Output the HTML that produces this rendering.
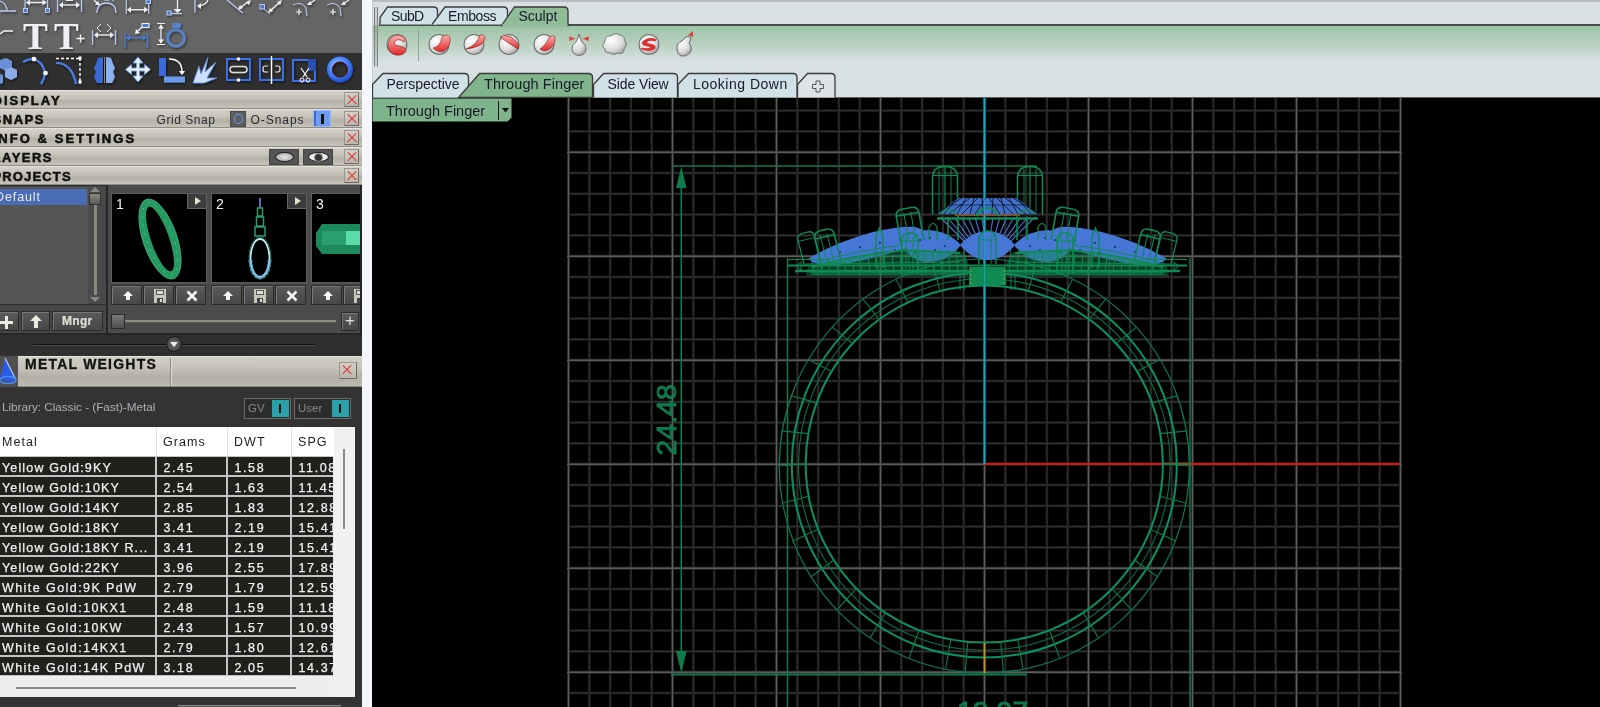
<!DOCTYPE html><html><head><meta charset="utf-8"><style>
*{margin:0;padding:0;box-sizing:border-box}
html,body{width:1600px;height:707px;overflow:hidden;background:#000;font-family:"Liberation Sans",sans-serif}
.a{position:absolute}
#left{left:0;top:0;width:362px;height:707px;background:#333;overflow:hidden}
.hdr{position:absolute;left:0;width:362px;height:19px;background:linear-gradient(#d4d1c8,#c3c0b6 45%,#b4b1a7 60%,#c6c3b9);border-top:1px solid #e6e3dc;border-bottom:1px solid #8e8b83;font-weight:bold;font-size:13px;color:#111;letter-spacing:0.6px;line-height:17px}
.hdr span.t{position:absolute;left:-7.5px;top:1px;-webkit-text-stroke:0.55px #111}
.xb{position:absolute;left:344px;width:15px;height:15px;background:linear-gradient(#d2cfc6,#b9b6ad);border:1px solid #9a978f;border-right-color:#6e6b64;border-bottom-color:#6e6b64}
.xb:before,.xb:after{content:"";position:absolute;left:1px;top:6px;width:12px;height:1.3px;background:#e03030;transform:rotate(45deg)}
.xb:after{transform:rotate(-45deg)}
#right{left:372px;top:0;width:1228px;height:98px;background:#d8e0e4}
.tab{position:absolute;font-size:14px;color:#1a1a2a;line-height:18px}
.gl{mix-blend-mode:lighten}
</style></head><body>
<div id="left" class="a">
<div class="a" style="left:0;top:0;width:362px;height:53px;background:#656565"></div>
<div class="a" style="left:0;top:53px;width:362px;height:37px;background:#2f2f2f"></div>
<svg class="a" style="left:0;top:0" width="362" height="90" viewBox="0 0 362 90"><defs><filter id="sh" x="-20%" y="-20%" width="150%" height="150%"><feDropShadow dx="1" dy="1.5" stdDeviation="0.8" flood-color="#000" flood-opacity="0.55"/></filter><radialGradient id="bring" cx="0.4" cy="0.35" r="0.75"><stop offset="0" stop-color="#c0d8ff"/><stop offset="0.55" stop-color="#4a88ff"/><stop offset="1" stop-color="#2050d0"/></radialGradient></defs><g filter="url(#sh)" fill="none" stroke-linecap="butt"><path d="M0,1 Q6,3 7,10" stroke="#b8c8ee" stroke-width="1.3"/><line x1="0" y1="11" x2="16" y2="11" stroke="#b8c8ee" stroke-width="1.5"/><line x1="25" y1="0" x2="25" y2="10" stroke="#b8c8ee" stroke-width="1.2"/><line x1="47.5" y1="0" x2="47.5" y2="10" stroke="#b8c8ee" stroke-width="1.2"/><line x1="27" y1="2.5" x2="46" y2="2.5" stroke="#eef0f6" stroke-width="1.3"/><path d="M26,2.5 l4,-3 v6 Z M46.5,2.5 l-4,-3 v6 Z" fill="#eef0f6" stroke="none"/><rect x="23.5" y="8.5" width="4" height="4" fill="#4a78d0" stroke="#b8c8ee" stroke-width="1"/><rect x="45.5" y="8.5" width="4" height="4" fill="#4a78d0" stroke="#b8c8ee" stroke-width="1"/><line x1="57.5" y1="0" x2="57.5" y2="12" stroke="#b8c8ee" stroke-width="1.2"/><line x1="81.5" y1="0" x2="81.5" y2="12" stroke="#b8c8ee" stroke-width="1.2"/><line x1="60" y1="5" x2="79" y2="5" stroke="#eef0f6" stroke-width="1.3"/><path d="M59,5 l4,-3 v6 Z M80,5 l-4,-3 v6 Z" fill="#eef0f6" stroke="none"/><rect x="66" y="-1" width="7" height="2" fill="#eef0f6" stroke="none"/><path d="M97,13 Q97,3 106.5,3 Q116,3 116,13" stroke="#b8c8ee" stroke-width="1.3"/><path d="M94,0 L99,5" stroke="#eef0f6" stroke-width="1.2"/><path d="M100,5 l-5,0 l3,-4 Z" fill="#eef0f6" stroke="none"/><path d="M104,0 Q108,0 109,1 M112,0 Q113,1 114,1" stroke="#b8c8ee" stroke-width="1"/><line x1="126.3" y1="0" x2="126.3" y2="14" stroke="#b8c8ee" stroke-width="1.2"/><line x1="148.6" y1="0" x2="148.6" y2="14" stroke="#b8c8ee" stroke-width="1.2"/><line x1="128" y1="9.7" x2="147" y2="9.7" stroke="#eef0f6" stroke-width="1.3"/><path d="M127,9.7 l4,-3 v6 Z M148,9.7 l-4,-3 v6 Z" fill="#eef0f6" stroke="none"/><rect x="146" y="0" width="4.5" height="3.5" fill="#4a78d0" stroke="#b8c8ee" stroke-width="1"/><line x1="177.5" y1="0" x2="177.5" y2="11" stroke="#eef0f6" stroke-width="1.2"/><path d="M173.5,9 h8 l-4,4 Z" fill="#eef0f6" stroke="none"/><line x1="171" y1="13.5" x2="182" y2="13.5" stroke="#b8c8ee" stroke-width="1.2"/><rect x="167" y="11" width="4" height="4" fill="#4a78d0" stroke="#b8c8ee" stroke-width="1"/><line x1="195" y1="0" x2="195" y2="12.5" stroke="#b8c8ee" stroke-width="1.3"/><path d="M199,6 Q206,5 208,0" stroke="#eef0f6" stroke-width="1.2"/><path d="M197,6 l4,-3 v6 Z" fill="#eef0f6" stroke="none"/><line x1="227" y1="0" x2="243" y2="13" stroke="#b8c8ee" stroke-width="1.1"/><line x1="240" y1="8" x2="249" y2="1" stroke="#eef0f6" stroke-width="1.3"/><path d="M238,10 l2,-5 l3,3 Z M251,0 l-2,5 l-3,-3 Z" fill="#eef0f6" stroke="none"/><rect x="260" y="4.5" width="4.5" height="4.5" fill="#4a78d0" stroke="#b8c8ee" stroke-width="1"/><line x1="264" y1="9" x2="270" y2="14" stroke="#b8c8ee" stroke-width="1"/><line x1="270" y1="11" x2="280" y2="2" stroke="#eef0f6" stroke-width="1.3"/><path d="M268,13 l2,-5 l3,3 Z M282,0 l-2,5 l-3,-3 Z" fill="#eef0f6" stroke="none"/><path d="M293,5 Q301,1 306,8 L307,16" stroke="#b8c8ee" stroke-width="1.1"/><path d="M296,12 h6 M299,9 v6" stroke="#eef0f6" stroke-width="1.2"/><line x1="309" y1="4" x2="315" y2="0" stroke="#eef0f6" stroke-width="1.2"/><path d="M307,5 l5,0 l-2,-4 Z" fill="#eef0f6" stroke="none"/><path d="M327,5 Q335,1 340,8 L341,16" stroke="#b8c8ee" stroke-width="1.1"/><path d="M330,12 h6 M333,9 v6" stroke="#eef0f6" stroke-width="1.2"/><line x1="343" y1="4" x2="349" y2="0" stroke="#eef0f6" stroke-width="1.2"/><path d="M341,5 l5,0 l-2,-4 Z" fill="#eef0f6" stroke="none"/><path d="M0,34 L4,31 L13,31" stroke="#eef0f6" stroke-width="1.3"/></g><g filter="url(#sh)"><text x="23" y="49" font-family="Liberation Serif" font-weight="bold" font-size="37" fill="#eef0f6">T</text><text x="54" y="49" font-family="Liberation Serif" font-weight="bold" font-size="37" fill="#eef0f6">T</text></g><g filter="url(#sh)" fill="none"><path d="M76.5,38.5 h8 M80.5,34.5 v8" stroke="#eef0f6" stroke-width="1.3"/><line x1="92.5" y1="30" x2="92.5" y2="45" stroke="#b8c8ee" stroke-width="1.2"/><line x1="115.5" y1="30" x2="115.5" y2="45" stroke="#b8c8ee" stroke-width="1.2"/><line x1="95" y1="35" x2="113" y2="35" stroke="#eef0f6" stroke-width="1.3"/><path d="M94,35 l4,-3 v6 Z M114,35 l-4,-3 v6 Z" fill="#eef0f6" stroke="none"/><path d="M101,24 l-4,4 l4,4 M107,24 l4,4 l-4,4" stroke="#eef0f6" stroke-width="1"/><line x1="125" y1="33" x2="125" y2="48" stroke="#4a78d0" stroke-width="1.3"/><line x1="147.5" y1="33" x2="147.5" y2="48" stroke="#4a78d0" stroke-width="1.3"/><line x1="127" y1="37.8" x2="146" y2="37.8" stroke="#4a78d0" stroke-width="1.4"/><path d="M126,37.8 l4,-3 v6 Z M146.5,37.8 l-4,-3 v6 Z" fill="#4a78d0" stroke="none"/><line x1="136" y1="33" x2="142" y2="27" stroke="#eef0f6" stroke-width="1.2"/><path d="M135,34 l1,-5 l4,4 Z" fill="#eef0f6" stroke="none"/><rect x="142" y="23.5" width="7" height="4" fill="#4a78d0" stroke="#eef0f6" stroke-width="1.1"/><path d="M157,23.5 h8 M157,44.5 h8 M161,25 v18" stroke="#eef0f6" stroke-width="1.2"/><path d="M161,24.5 l-3,4 h6 Z M161,43.5 l-3,-4 h6 Z" fill="#eef0f6" stroke="none"/><circle cx="176" cy="38" r="8.3" stroke="#5a80c8" stroke-width="3"/><path d="M172,23 h9 v5 h-9 Z" fill="#5a80c8" stroke="none"/></g><g filter="url(#sh)" fill="none"><path d="M0,60 l6,-2 l6,3 v7 l-6,3 l-6,-3 Z M0,74 l3,1 v8 l-3,1 Z" fill="#6a90d8" stroke="none"/><path d="M5,70 l6,-3 l6,3 v7 l-6,3 l-6,-3 Z" fill="#8aaae8" stroke="none"/><path d="M23,62 Q34,55 42,65 Q48,74 41,84" stroke="#4a80e8" stroke-width="2.2"/><circle cx="34" cy="59" r="2.3" fill="#fff" stroke="none"/><circle cx="45.5" cy="73" r="2.3" fill="#fff" stroke="none"/><path d="M56,63 Q72,63 76,84" stroke="#4a80e8" stroke-width="2.2"/><path d="M56,58.5 h24 M80,58 v25" stroke="#fff" stroke-width="1.4" stroke-dasharray="3,2"/><rect x="78.5" y="56.5" width="3" height="3" fill="#fff" stroke="none"/><rect x="78.5" y="80.5" width="3" height="3" fill="#fff" stroke="none"/><path d="M103,57 L98,58 L96,64 L94,68 L96,72 L94,77 L97,83 L103,83 Z" fill="#3a6ad8" stroke="none"/><path d="M106,57 L111,58 L113,64 L115,68 L113,72 L115,77 L112,83 L106,83 Z" fill="#8ab0f0" stroke="none"/><line x1="104.5" y1="57" x2="104.5" y2="83" stroke="#000" stroke-width="1.5"/><line x1="104.5" y1="57" x2="104.5" y2="83" stroke="#ddd" stroke-width="0.6"/><path d="M138,57 l-5,6 h3.5 v5 h-5 v-3.5 l-6,5 l6,5 v-3.5 h5 v5 h-3.5 l5,6 l5,-6 h-3.5 v-5 h5 v3.5 l6,-5 l-6,-5 v3.5 h-5 v-5 h3.5 Z" fill="#e8f0ff" stroke="#6a9aee" stroke-width="0.8"/><rect x="159" y="58" width="7" height="18" fill="#3a6ad8" stroke="none"/><rect x="164" y="76.5" width="21" height="6" fill="#6a9af0" stroke="none"/><path d="M169,59 Q182,59 182,72" stroke="#fff" stroke-width="1.3"/><path d="M179,71 h6 l-3,4 Z" fill="#fff" stroke="none"/><path d="M193,83 L199,66 L201,74 L208,57 L205,72 L216,62 L207,78 L217,78 L204,83 Z" fill="#cfe0ff" stroke="#5a8ae8" stroke-width="0.8"/><rect x="227" y="59" width="23" height="21" stroke="#3a70e8" stroke-width="2"/><circle cx="238.5" cy="59" r="1.8" fill="#fff" stroke="none"/><circle cx="238.5" cy="80" r="1.8" fill="#fff" stroke="none"/><rect x="230" y="66.5" width="17" height="6" rx="3" stroke="#ddd" stroke-width="1.4"/><rect x="260" y="59" width="23" height="21" stroke="#3a70e8" stroke-width="2"/><line x1="271.5" y1="56" x2="271.5" y2="84" stroke="#fff" stroke-width="1.3"/><path d="M268,66 h-3 q-2,0 -2,3 q0,3 2,3 h3 M275,66 h3 q2,0 2,3 q0,3 -2,3 h-3" stroke="#ddd" stroke-width="1.2"/><rect x="293" y="60" width="22" height="21" stroke="#3a70e8" stroke-width="2"/><rect x="308" y="59" width="8" height="12" fill="#2a50b0" stroke="none"/><path d="M301,68 l6,9 M309,68 l-6,9" stroke="#fff" stroke-width="1.1"/><circle cx="302" cy="80" r="2" stroke="#fff" stroke-width="1"/><circle cx="308" cy="80" r="2" stroke="#fff" stroke-width="1"/><circle cx="340" cy="69.5" r="10.5" stroke="url(#bring)" stroke-width="5"/><circle cx="340" cy="69.5" r="7.5" stroke="#5a1020" stroke-width="0.8"/></g></svg>
<div class="hdr" style="top:90px"><span class="t" style="letter-spacing:2.0px">DISPLAY</span><div class="xb" style="top:1px"></div></div>
<div class="hdr" style="top:109px"><span class="t" style="letter-spacing:1.55px">SNAPS</span><span class="a" style="left:156.5px;top:2px;font-weight:normal;font-size:12px;letter-spacing:0.55px;color:#2a2a35">Grid Snap</span><div class="a" style="left:230px;top:1px;width:16px;height:16px;background:#5e5e5e;border:1px solid #4a4a4a"><div class="a" style="left:2.5px;top:2px;width:9px;height:10px;border:1.3px solid #6a9af0;border-radius:50%"></div></div><span class="a" style="left:250.5px;top:2px;font-weight:normal;font-size:12px;letter-spacing:0.95px;color:#2a2a35">O-Snaps</span><div class="a" style="left:313px;top:0px;width:18px;height:17px;background:linear-gradient(90deg,#3e6ad0 0,#3e6ad0 2px,#6e9cf0 2px);border:1px solid #9ab8f0"><div class="a" style="left:7px;top:3px;width:2.5px;height:10px;background:#111"></div></div><div class="xb" style="top:1px"></div></div>
<div class="hdr" style="top:128px"><span class="t" style="letter-spacing:2.07px">INFO &amp; SETTINGS</span><div class="xb" style="top:1px"></div></div>
<div class="hdr" style="top:147px"><span class="t" style="letter-spacing:1.5px">LAYERS</span><div class="a" style="left:269px;top:1px;width:30px;height:16px;background:#555;border:1px solid #444"><div class="a" style="left:5px;top:2px;width:19px;height:10px;border-radius:50%;background:radial-gradient(#e8e8e8,#9a9a9a);border:1px solid #222"></div></div><div class="a" style="left:303px;top:1px;width:30px;height:16px;background:#555;border:1px solid #444"><div class="a" style="left:4px;top:2px;width:21px;height:10px;border-radius:50%;background:#eee;border:1px solid #222"></div><div class="a" style="left:10px;top:3px;width:9px;height:9px;border-radius:50%;background:#333;border:1.5px solid #999"></div></div><div class="xb" style="top:1px"></div></div>
<div class="hdr" style="top:166px"><span class="t" style="letter-spacing:1.15px">PROJECTS</span><div class="xb" style="top:1px"></div></div>
<div class="a" style="left:0;top:185px;width:362px;height:150px;background:#4b4b4b"></div>
<div class="a" style="left:0;top:333px;width:362px;height:2px;background:#262626"></div>
<div class="a" style="left:0;top:185px;width:106px;height:120px;background:#484848;border-top:1px solid #2a2a2a"></div>
<div class="a" style="left:0;top:187px;width:88px;height:117px;background:#555555"></div>
<div class="a" style="left:0;top:189px;width:87px;height:16px;background:#4a6cb4"></div>
<span class="a" style="left:-5px;top:189px;font-size:12.5px;line-height:16px;color:#e6e8f4;letter-spacing:0.9px">Default</span>
<div class="a" style="left:88px;top:186px;width:14px;height:118px;background:#4a4a4a"></div>
<div class="a" style="left:94px;top:195px;width:3px;height:100px;background:#8a897c"></div>
<div class="a" style="left:89px;top:193px;width:12px;height:12px;background:linear-gradient(#8a8a80,#5a5a55);border:1px solid #333"></div>
<div class="a" style="left:90px;top:187px;width:0;height:0;border-left:5px solid transparent;border-right:5px solid transparent;border-bottom:5px solid #888"></div>
<div class="a" style="left:90px;top:297px;width:0;height:0;border-left:5px solid transparent;border-right:5px solid transparent;border-top:5px solid #888"></div>
<div class="a" style="left:0;top:304px;width:106px;height:29px;background:#474747;border-top:1px solid #2e2e2e"></div>
<div class="a" style="left:-2px;top:311px;width:21px;height:20px;background:linear-gradient(#5a5a5a,#474747);border:1px solid #2a2a2a;box-shadow:inset 1px 1px 0 #777"><svg class="a" style="left:0;top:3px" width="14" height="14"><path d="M6,1 h3 v5 h5 v3 h-5 v5 h-3 v-5 h-5 v-3 h5 Z" fill="#ecebe0"/></svg></div>
<div class="a" style="left:21px;top:311px;width:29px;height:20px;background:linear-gradient(#5a5a5a,#474747);border:1px solid #2a2a2a;box-shadow:inset 1px 1px 0 #777"><svg class="a" style="left:7px;top:2px" width="14" height="15"><path d="M7,1 L13,7 H9 V14 H5 V7 H1 Z" fill="#ecebe0"/></svg></div>
<div class="a" style="left:52px;top:311px;width:51px;height:20px;background:linear-gradient(#5a5a5a,#474747);border:1px solid #2a2a2a;box-shadow:inset 1px 1px 0 #777"><span class="a" style="left:9px;top:2px;font-size:12px;font-weight:bold;color:#e0ded4;letter-spacing:0.3px;-webkit-text-stroke:0.2px #e0ded4">Mngr</span></div>
<div class="a" style="left:106px;top:185px;width:2px;height:152px;background:#262626"></div>
<div class="a" style="left:111px;top:193px;width:96px;height:90px;background:#000;border:1px solid #5e5e5e;overflow:hidden"><svg class="a" style="left:0;top:0" width="96" height="90"><g transform="rotate(-19 48 45)"><path d="M48,3 a17,42 0 1,0 0.01,0 Z M48,11 a9,34 0 1,1 -0.01,0 Z" fill="#249a62" fill-rule="evenodd"/><ellipse cx="48" cy="45" rx="13" ry="38" fill="none" stroke="#a8c890" stroke-width="0.7" stroke-dasharray="1.5,7"/><ellipse cx="48" cy="45" rx="17" ry="42" fill="none" stroke="#50c890" stroke-width="0.6"/></g></svg><span class="a" style="left:4px;top:2px;font-size:14px;color:#f4f4f4">1</span><div class="a" style="left:75px;top:-1px;width:20px;height:16px;background:#3c3c3c;border:1px solid #666"><div class="a" style="left:7px;top:3px;width:0;height:0;border-top:4.5px solid transparent;border-bottom:4.5px solid transparent;border-left:6px solid #e8e4cc"></div></div></div>
<div class="a" style="left:211px;top:193px;width:96px;height:90px;background:#000;border:1px solid #5e5e5e;overflow:hidden"><svg class="a" style="left:0;top:0" width="96" height="90"><path d="M48,4 L48,14" stroke="#7090d8" stroke-width="1.6"/><path d="M45.5,14 h5 v8 h-5 Z M44.5,23 h7 v9 h-7 Z M43,33 h10 v9 h-10 Z" fill="none" stroke="#2a9a70" stroke-width="1.5"/><ellipse cx="48" cy="64" rx="9.5" ry="19" fill="none" stroke="#c8ecf4" stroke-width="1.8"/><path d="M38.5,66 Q39,82 48,83.5 Q57,82 57.5,66" fill="none" stroke="#70b8e8" stroke-width="3.5" stroke-dasharray="3,1"/><ellipse cx="48" cy="64" rx="11" ry="21" fill="none" stroke="#2a8a70" stroke-width="0.8"/></svg><span class="a" style="left:4px;top:2px;font-size:14px;color:#f4f4f4">2</span><div class="a" style="left:75px;top:-1px;width:20px;height:16px;background:#3c3c3c;border:1px solid #666"><div class="a" style="left:7px;top:3px;width:0;height:0;border-top:4.5px solid transparent;border-bottom:4.5px solid transparent;border-left:6px solid #e8e4cc"></div></div></div>
<div class="a" style="left:311px;top:193px;width:96px;height:90px;background:#000;border:1px solid #5e5e5e;overflow:hidden"><svg class="a" style="left:0;top:0" width="60" height="90"><path d="M4,39 L10,30 L60,30 L60,60 L10,60 L4,52 Z" fill="#1d8a5c"/><rect x="34" y="37" width="20" height="14" fill="#5adca8"/><rect x="10" y="37" width="24" height="14" fill="#2aa070"/></svg><span class="a" style="left:4px;top:2px;font-size:14px;color:#f4f4f4">3</span></div>
<div class="a" style="left:111px;top:285px;width:31px;height:20px;background:linear-gradient(#5a5a5a,#474747);border:1px solid #2a2a2a;box-shadow:inset 1px 1px 0 #777"><svg class="a" style="left:9px;top:3px" width="14" height="14"><path d="M7,2 L12,7 H9 V11 H5 V7 H2 Z" fill="#f4f4f4"/></svg></div>
<div class="a" style="left:143px;top:285px;width:31px;height:20px;background:linear-gradient(#5a5a5a,#474747);border:1px solid #2a2a2a;box-shadow:inset 1px 1px 0 #777"><svg class="a" style="left:8px;top:2px" width="16" height="16"><path d="M2,1 h12 v14 h-12 Z" fill="#c8c8b8"/><rect x="4" y="2" width="8" height="5" fill="#555"/><rect x="5" y="3" width="6" height="3" fill="#ddd"/><rect x="5" y="10" width="6" height="5" fill="#444"/><rect x="8" y="11" width="2" height="3" fill="#ddd"/></svg></div>
<div class="a" style="left:175px;top:285px;width:31px;height:20px;background:linear-gradient(#5a5a5a,#474747);border:1px solid #2a2a2a;box-shadow:inset 1px 1px 0 #777"><svg class="a" style="left:9px;top:3px" width="14" height="14"><path d="M2.5,2.5 L11.5,11.5 M11.5,2.5 L2.5,11.5" stroke="#f4f4f4" stroke-width="2.6"/></svg></div>
<div class="a" style="left:211px;top:285px;width:31px;height:20px;background:linear-gradient(#5a5a5a,#474747);border:1px solid #2a2a2a;box-shadow:inset 1px 1px 0 #777"><svg class="a" style="left:9px;top:3px" width="14" height="14"><path d="M7,2 L12,7 H9 V11 H5 V7 H2 Z" fill="#f4f4f4"/></svg></div>
<div class="a" style="left:243px;top:285px;width:31px;height:20px;background:linear-gradient(#5a5a5a,#474747);border:1px solid #2a2a2a;box-shadow:inset 1px 1px 0 #777"><svg class="a" style="left:8px;top:2px" width="16" height="16"><path d="M2,1 h12 v14 h-12 Z" fill="#c8c8b8"/><rect x="4" y="2" width="8" height="5" fill="#555"/><rect x="5" y="3" width="6" height="3" fill="#ddd"/><rect x="5" y="10" width="6" height="5" fill="#444"/><rect x="8" y="11" width="2" height="3" fill="#ddd"/></svg></div>
<div class="a" style="left:275px;top:285px;width:31px;height:20px;background:linear-gradient(#5a5a5a,#474747);border:1px solid #2a2a2a;box-shadow:inset 1px 1px 0 #777"><svg class="a" style="left:9px;top:3px" width="14" height="14"><path d="M2.5,2.5 L11.5,11.5 M11.5,2.5 L2.5,11.5" stroke="#f4f4f4" stroke-width="2.6"/></svg></div>
<div class="a" style="left:311px;top:285px;width:31px;height:20px;background:linear-gradient(#5a5a5a,#474747);border:1px solid #2a2a2a;box-shadow:inset 1px 1px 0 #777"><svg class="a" style="left:9px;top:3px" width="14" height="14"><path d="M7,2 L12,7 H9 V11 H5 V7 H2 Z" fill="#f4f4f4"/></svg></div>
<div class="a" style="left:343px;top:285px;width:31px;height:20px;background:linear-gradient(#5a5a5a,#474747);border:1px solid #2a2a2a;box-shadow:inset 1px 1px 0 #777"><svg class="a" style="left:8px;top:2px" width="16" height="16"><path d="M2,1 h12 v14 h-12 Z" fill="#c8c8b8"/><rect x="4" y="2" width="8" height="5" fill="#555"/><rect x="5" y="3" width="6" height="3" fill="#ddd"/><rect x="5" y="10" width="6" height="5" fill="#444"/><rect x="8" y="11" width="2" height="3" fill="#ddd"/></svg></div>
<div class="a" style="left:125px;top:320px;width:211px;height:3px;background:#8e8c7c;border-bottom:1px solid #5a5a50"></div>
<div class="a" style="left:111px;top:314px;width:14px;height:15px;background:linear-gradient(#7a7a7a,#4e4e4e);border:1px solid #2a2a2a"></div>
<div class="a" style="left:341px;top:312px;width:18px;height:19px;background:linear-gradient(#5a5a5a,#474747);border:1px solid #2a2a2a;box-shadow:inset 1px 1px 0 #777"><span class="a" style="left:3px;top:-2px;font-size:17px;color:#e0e0e0">+</span></div>
<div class="a" style="left:360px;top:185px;width:2px;height:152px;background:#262626"></div>
<div class="a" style="left:0;top:335px;width:362px;height:20px;background:#2f2f2f"></div>
<div class="a" style="left:33px;top:344px;width:283px;height:1px;background:#111;box-shadow:0 1px 0 #4a4a4a"></div>
<div class="a" style="left:166px;top:336px;width:16px;height:16px;border-radius:50%;background:radial-gradient(#6a6a6a,#3a3a3a);border:1px solid #1a1a1a"><div class="a" style="left:3px;top:5px;width:0;height:0;border-left:4px solid transparent;border-right:4px solid transparent;border-top:5px solid #eee"></div></div>
<div class="a" style="left:18px;top:356px;width:344px;height:31px;background:linear-gradient(#d2cfc6,#c4c1b8 40%,#b2afa6 70%,#bdbab1);border-top:1px solid #e4e1da;border-bottom:1px solid #8e8b83"></div>
<div class="a" style="left:170px;top:358px;width:1px;height:28px;background:#8a8780;box-shadow:1px 0 0 #e0ddd6"></div>
<span class="a" style="left:25px;top:356px;font-size:14px;font-weight:bold;color:#111;letter-spacing:1.22px;-webkit-text-stroke:0.3px #111">METAL WEIGHTS</span>
<div class="xb" style="left:339px;top:362px;width:18px;height:17px"></div>
<div class="a" style="left:0;top:356px;width:18px;height:31px;background:#505050"></div>
<svg class="a" style="left:0;top:356px" width="18" height="31"><path d="M5,2 L0,22 Q6,28 16,24 Z" fill="#2a5ae0"/><path d="M5,2 L16,24" stroke="#a8c8ff" stroke-width="1.2"/><ellipse cx="8" cy="24" rx="8" ry="3.5" fill="none" stroke="#4a8aff" stroke-width="1.5"/></svg>
<div class="a" style="left:0;top:387px;width:362px;height:40px;background:#333333"></div>
<span class="a" style="left:2px;top:400px;font-size:11.7px;color:#aab0b8;letter-spacing:0px">Library: Classic - (Fast)-Metal</span>
<div class="a" style="left:244px;top:398px;width:47px;height:21px;background:#2c2c2c;border:1px solid #6a6a6a"><span class="a" style="left:3px;top:3px;font-size:11.5px;color:#8a8a8a">GV</span><div class="a" style="left:27px;top:1px;width:17px;height:17px;background:#2aa0a8"><div class="a" style="left:7px;top:4px;width:2px;height:9px;background:#111"></div></div></div>
<div class="a" style="left:294px;top:398px;width:57px;height:21px;background:#2c2c2c;border:1px solid #6a6a6a"><span class="a" style="left:3px;top:3px;font-size:11.5px;color:#8a8a8a">User</span><div class="a" style="left:37px;top:1px;width:17px;height:17px;background:#2aa0a8"><div class="a" style="left:7px;top:4px;width:2px;height:9px;background:#111"></div></div></div>
<div class="a" style="left:0;top:427px;width:355px;height:271px;background:#eeeeee"></div>
<div class="a" style="left:0;top:427px;width:334px;height:29px;background:#ffffff"></div>
<div class="a" style="left:334px;top:427px;width:21px;height:271px;background:#f0f0f0"></div>
<span class="a" style="left:2px;top:435px;font-size:12.5px;color:#1e1e1e;letter-spacing:1.08px">Metal</span>
<span class="a" style="left:163px;top:435px;font-size:12.5px;color:#1e1e1e;letter-spacing:1.08px">Grams</span>
<span class="a" style="left:234px;top:435px;font-size:12.5px;color:#1e1e1e;letter-spacing:1.08px">DWT</span>
<span class="a" style="left:298px;top:435px;font-size:12.5px;color:#1e1e1e;letter-spacing:1.08px">SPG</span>
<div class="a" style="left:155.5px;top:427px;width:1px;height:29px;background:#e2e2e2"></div>
<div class="a" style="left:226.5px;top:427px;width:1px;height:29px;background:#e2e2e2"></div>
<div class="a" style="left:290.5px;top:427px;width:1px;height:29px;background:#e2e2e2"></div>
<div class="a" style="left:0;top:456px;width:333px;height:220px;background:#c4c4c4;overflow:hidden">
<div class="a" style="left:0px;top:1px;width:155px;height:18px;background:#22201d;overflow:hidden"><span class="a" style="left:2px;top:2.5px;font-size:12.5px;line-height:16px;color:#f2f2f2;letter-spacing:1.15px;white-space:nowrap;-webkit-text-stroke:0.25px #f2f2f2">Yellow Gold:9KY</span></div>
<div class="a" style="left:157px;top:1px;width:69px;height:18px;background:#22201d;overflow:hidden"><span class="a" style="left:6.5px;top:2.5px;font-size:12.5px;line-height:16px;color:#f2f2f2;letter-spacing:1.6px;white-space:nowrap;-webkit-text-stroke:0.25px #f2f2f2">2.45</span></div>
<div class="a" style="left:228px;top:1px;width:62px;height:18px;background:#22201d;overflow:hidden"><span class="a" style="left:6.5px;top:2.5px;font-size:12.5px;line-height:16px;color:#f2f2f2;letter-spacing:1.6px;white-space:nowrap;-webkit-text-stroke:0.25px #f2f2f2">1.58</span></div>
<div class="a" style="left:292px;top:1px;width:48px;height:18px;background:#22201d;overflow:hidden"><span class="a" style="left:6.5px;top:2.5px;font-size:12.5px;line-height:16px;color:#f2f2f2;letter-spacing:1.6px;white-space:nowrap;-webkit-text-stroke:0.25px #f2f2f2">11.08</span></div>
<div class="a" style="left:0px;top:21px;width:155px;height:18px;background:#22201d;overflow:hidden"><span class="a" style="left:2px;top:2.5px;font-size:12.5px;line-height:16px;color:#f2f2f2;letter-spacing:1.15px;white-space:nowrap;-webkit-text-stroke:0.25px #f2f2f2">Yellow Gold:10KY</span></div>
<div class="a" style="left:157px;top:21px;width:69px;height:18px;background:#22201d;overflow:hidden"><span class="a" style="left:6.5px;top:2.5px;font-size:12.5px;line-height:16px;color:#f2f2f2;letter-spacing:1.6px;white-space:nowrap;-webkit-text-stroke:0.25px #f2f2f2">2.54</span></div>
<div class="a" style="left:228px;top:21px;width:62px;height:18px;background:#22201d;overflow:hidden"><span class="a" style="left:6.5px;top:2.5px;font-size:12.5px;line-height:16px;color:#f2f2f2;letter-spacing:1.6px;white-space:nowrap;-webkit-text-stroke:0.25px #f2f2f2">1.63</span></div>
<div class="a" style="left:292px;top:21px;width:48px;height:18px;background:#22201d;overflow:hidden"><span class="a" style="left:6.5px;top:2.5px;font-size:12.5px;line-height:16px;color:#f2f2f2;letter-spacing:1.6px;white-space:nowrap;-webkit-text-stroke:0.25px #f2f2f2">11.45</span></div>
<div class="a" style="left:0px;top:41px;width:155px;height:18px;background:#22201d;overflow:hidden"><span class="a" style="left:2px;top:2.5px;font-size:12.5px;line-height:16px;color:#f2f2f2;letter-spacing:1.15px;white-space:nowrap;-webkit-text-stroke:0.25px #f2f2f2">Yellow Gold:14KY</span></div>
<div class="a" style="left:157px;top:41px;width:69px;height:18px;background:#22201d;overflow:hidden"><span class="a" style="left:6.5px;top:2.5px;font-size:12.5px;line-height:16px;color:#f2f2f2;letter-spacing:1.6px;white-space:nowrap;-webkit-text-stroke:0.25px #f2f2f2">2.85</span></div>
<div class="a" style="left:228px;top:41px;width:62px;height:18px;background:#22201d;overflow:hidden"><span class="a" style="left:6.5px;top:2.5px;font-size:12.5px;line-height:16px;color:#f2f2f2;letter-spacing:1.6px;white-space:nowrap;-webkit-text-stroke:0.25px #f2f2f2">1.83</span></div>
<div class="a" style="left:292px;top:41px;width:48px;height:18px;background:#22201d;overflow:hidden"><span class="a" style="left:6.5px;top:2.5px;font-size:12.5px;line-height:16px;color:#f2f2f2;letter-spacing:1.6px;white-space:nowrap;-webkit-text-stroke:0.25px #f2f2f2">12.88</span></div>
<div class="a" style="left:0px;top:61px;width:155px;height:18px;background:#22201d;overflow:hidden"><span class="a" style="left:2px;top:2.5px;font-size:12.5px;line-height:16px;color:#f2f2f2;letter-spacing:1.15px;white-space:nowrap;-webkit-text-stroke:0.25px #f2f2f2">Yellow Gold:18KY</span></div>
<div class="a" style="left:157px;top:61px;width:69px;height:18px;background:#22201d;overflow:hidden"><span class="a" style="left:6.5px;top:2.5px;font-size:12.5px;line-height:16px;color:#f2f2f2;letter-spacing:1.6px;white-space:nowrap;-webkit-text-stroke:0.25px #f2f2f2">3.41</span></div>
<div class="a" style="left:228px;top:61px;width:62px;height:18px;background:#22201d;overflow:hidden"><span class="a" style="left:6.5px;top:2.5px;font-size:12.5px;line-height:16px;color:#f2f2f2;letter-spacing:1.6px;white-space:nowrap;-webkit-text-stroke:0.25px #f2f2f2">2.19</span></div>
<div class="a" style="left:292px;top:61px;width:48px;height:18px;background:#22201d;overflow:hidden"><span class="a" style="left:6.5px;top:2.5px;font-size:12.5px;line-height:16px;color:#f2f2f2;letter-spacing:1.6px;white-space:nowrap;-webkit-text-stroke:0.25px #f2f2f2">15.41</span></div>
<div class="a" style="left:0px;top:81px;width:155px;height:18px;background:#22201d;overflow:hidden"><span class="a" style="left:2px;top:2.5px;font-size:12.5px;line-height:16px;color:#f2f2f2;letter-spacing:1.15px;white-space:nowrap;-webkit-text-stroke:0.25px #f2f2f2">Yellow Gold:18KY R...</span></div>
<div class="a" style="left:157px;top:81px;width:69px;height:18px;background:#22201d;overflow:hidden"><span class="a" style="left:6.5px;top:2.5px;font-size:12.5px;line-height:16px;color:#f2f2f2;letter-spacing:1.6px;white-space:nowrap;-webkit-text-stroke:0.25px #f2f2f2">3.41</span></div>
<div class="a" style="left:228px;top:81px;width:62px;height:18px;background:#22201d;overflow:hidden"><span class="a" style="left:6.5px;top:2.5px;font-size:12.5px;line-height:16px;color:#f2f2f2;letter-spacing:1.6px;white-space:nowrap;-webkit-text-stroke:0.25px #f2f2f2">2.19</span></div>
<div class="a" style="left:292px;top:81px;width:48px;height:18px;background:#22201d;overflow:hidden"><span class="a" style="left:6.5px;top:2.5px;font-size:12.5px;line-height:16px;color:#f2f2f2;letter-spacing:1.6px;white-space:nowrap;-webkit-text-stroke:0.25px #f2f2f2">15.41</span></div>
<div class="a" style="left:0px;top:101px;width:155px;height:18px;background:#22201d;overflow:hidden"><span class="a" style="left:2px;top:2.5px;font-size:12.5px;line-height:16px;color:#f2f2f2;letter-spacing:1.15px;white-space:nowrap;-webkit-text-stroke:0.25px #f2f2f2">Yellow Gold:22KY</span></div>
<div class="a" style="left:157px;top:101px;width:69px;height:18px;background:#22201d;overflow:hidden"><span class="a" style="left:6.5px;top:2.5px;font-size:12.5px;line-height:16px;color:#f2f2f2;letter-spacing:1.6px;white-space:nowrap;-webkit-text-stroke:0.25px #f2f2f2">3.96</span></div>
<div class="a" style="left:228px;top:101px;width:62px;height:18px;background:#22201d;overflow:hidden"><span class="a" style="left:6.5px;top:2.5px;font-size:12.5px;line-height:16px;color:#f2f2f2;letter-spacing:1.6px;white-space:nowrap;-webkit-text-stroke:0.25px #f2f2f2">2.55</span></div>
<div class="a" style="left:292px;top:101px;width:48px;height:18px;background:#22201d;overflow:hidden"><span class="a" style="left:6.5px;top:2.5px;font-size:12.5px;line-height:16px;color:#f2f2f2;letter-spacing:1.6px;white-space:nowrap;-webkit-text-stroke:0.25px #f2f2f2">17.89</span></div>
<div class="a" style="left:0px;top:121px;width:155px;height:18px;background:#22201d;overflow:hidden"><span class="a" style="left:2px;top:2.5px;font-size:12.5px;line-height:16px;color:#f2f2f2;letter-spacing:1.43px;white-space:nowrap;-webkit-text-stroke:0.25px #f2f2f2">White Gold:9K PdW</span></div>
<div class="a" style="left:157px;top:121px;width:69px;height:18px;background:#22201d;overflow:hidden"><span class="a" style="left:6.5px;top:2.5px;font-size:12.5px;line-height:16px;color:#f2f2f2;letter-spacing:1.6px;white-space:nowrap;-webkit-text-stroke:0.25px #f2f2f2">2.79</span></div>
<div class="a" style="left:228px;top:121px;width:62px;height:18px;background:#22201d;overflow:hidden"><span class="a" style="left:6.5px;top:2.5px;font-size:12.5px;line-height:16px;color:#f2f2f2;letter-spacing:1.6px;white-space:nowrap;-webkit-text-stroke:0.25px #f2f2f2">1.79</span></div>
<div class="a" style="left:292px;top:121px;width:48px;height:18px;background:#22201d;overflow:hidden"><span class="a" style="left:6.5px;top:2.5px;font-size:12.5px;line-height:16px;color:#f2f2f2;letter-spacing:1.6px;white-space:nowrap;-webkit-text-stroke:0.25px #f2f2f2">12.59</span></div>
<div class="a" style="left:0px;top:141px;width:155px;height:18px;background:#22201d;overflow:hidden"><span class="a" style="left:2px;top:2.5px;font-size:12.5px;line-height:16px;color:#f2f2f2;letter-spacing:1.43px;white-space:nowrap;-webkit-text-stroke:0.25px #f2f2f2">White Gold:10KX1</span></div>
<div class="a" style="left:157px;top:141px;width:69px;height:18px;background:#22201d;overflow:hidden"><span class="a" style="left:6.5px;top:2.5px;font-size:12.5px;line-height:16px;color:#f2f2f2;letter-spacing:1.6px;white-space:nowrap;-webkit-text-stroke:0.25px #f2f2f2">2.48</span></div>
<div class="a" style="left:228px;top:141px;width:62px;height:18px;background:#22201d;overflow:hidden"><span class="a" style="left:6.5px;top:2.5px;font-size:12.5px;line-height:16px;color:#f2f2f2;letter-spacing:1.6px;white-space:nowrap;-webkit-text-stroke:0.25px #f2f2f2">1.59</span></div>
<div class="a" style="left:292px;top:141px;width:48px;height:18px;background:#22201d;overflow:hidden"><span class="a" style="left:6.5px;top:2.5px;font-size:12.5px;line-height:16px;color:#f2f2f2;letter-spacing:1.6px;white-space:nowrap;-webkit-text-stroke:0.25px #f2f2f2">11.18</span></div>
<div class="a" style="left:0px;top:161px;width:155px;height:18px;background:#22201d;overflow:hidden"><span class="a" style="left:2px;top:2.5px;font-size:12.5px;line-height:16px;color:#f2f2f2;letter-spacing:1.43px;white-space:nowrap;-webkit-text-stroke:0.25px #f2f2f2">White Gold:10KW</span></div>
<div class="a" style="left:157px;top:161px;width:69px;height:18px;background:#22201d;overflow:hidden"><span class="a" style="left:6.5px;top:2.5px;font-size:12.5px;line-height:16px;color:#f2f2f2;letter-spacing:1.6px;white-space:nowrap;-webkit-text-stroke:0.25px #f2f2f2">2.43</span></div>
<div class="a" style="left:228px;top:161px;width:62px;height:18px;background:#22201d;overflow:hidden"><span class="a" style="left:6.5px;top:2.5px;font-size:12.5px;line-height:16px;color:#f2f2f2;letter-spacing:1.6px;white-space:nowrap;-webkit-text-stroke:0.25px #f2f2f2">1.57</span></div>
<div class="a" style="left:292px;top:161px;width:48px;height:18px;background:#22201d;overflow:hidden"><span class="a" style="left:6.5px;top:2.5px;font-size:12.5px;line-height:16px;color:#f2f2f2;letter-spacing:1.6px;white-space:nowrap;-webkit-text-stroke:0.25px #f2f2f2">10.99</span></div>
<div class="a" style="left:0px;top:181px;width:155px;height:18px;background:#22201d;overflow:hidden"><span class="a" style="left:2px;top:2.5px;font-size:12.5px;line-height:16px;color:#f2f2f2;letter-spacing:1.43px;white-space:nowrap;-webkit-text-stroke:0.25px #f2f2f2">White Gold:14KX1</span></div>
<div class="a" style="left:157px;top:181px;width:69px;height:18px;background:#22201d;overflow:hidden"><span class="a" style="left:6.5px;top:2.5px;font-size:12.5px;line-height:16px;color:#f2f2f2;letter-spacing:1.6px;white-space:nowrap;-webkit-text-stroke:0.25px #f2f2f2">2.79</span></div>
<div class="a" style="left:228px;top:181px;width:62px;height:18px;background:#22201d;overflow:hidden"><span class="a" style="left:6.5px;top:2.5px;font-size:12.5px;line-height:16px;color:#f2f2f2;letter-spacing:1.6px;white-space:nowrap;-webkit-text-stroke:0.25px #f2f2f2">1.80</span></div>
<div class="a" style="left:292px;top:181px;width:48px;height:18px;background:#22201d;overflow:hidden"><span class="a" style="left:6.5px;top:2.5px;font-size:12.5px;line-height:16px;color:#f2f2f2;letter-spacing:1.6px;white-space:nowrap;-webkit-text-stroke:0.25px #f2f2f2">12.61</span></div>
<div class="a" style="left:0px;top:201px;width:155px;height:18px;background:#22201d;overflow:hidden"><span class="a" style="left:2px;top:2.5px;font-size:12.5px;line-height:16px;color:#f2f2f2;letter-spacing:1.43px;white-space:nowrap;-webkit-text-stroke:0.25px #f2f2f2">White Gold:14K PdW</span></div>
<div class="a" style="left:157px;top:201px;width:69px;height:18px;background:#22201d;overflow:hidden"><span class="a" style="left:6.5px;top:2.5px;font-size:12.5px;line-height:16px;color:#f2f2f2;letter-spacing:1.6px;white-space:nowrap;-webkit-text-stroke:0.25px #f2f2f2">3.18</span></div>
<div class="a" style="left:228px;top:201px;width:62px;height:18px;background:#22201d;overflow:hidden"><span class="a" style="left:6.5px;top:2.5px;font-size:12.5px;line-height:16px;color:#f2f2f2;letter-spacing:1.6px;white-space:nowrap;-webkit-text-stroke:0.25px #f2f2f2">2.05</span></div>
<div class="a" style="left:292px;top:201px;width:48px;height:18px;background:#22201d;overflow:hidden"><span class="a" style="left:6.5px;top:2.5px;font-size:12.5px;line-height:16px;color:#f2f2f2;letter-spacing:1.6px;white-space:nowrap;-webkit-text-stroke:0.25px #f2f2f2">14.37</span></div>
</div>
<div class="a" style="left:343px;top:449px;width:2px;height:80px;background:#8a8a8a"></div>
<div class="a" style="left:16px;top:687px;width:280px;height:2px;background:#8a8a8a"></div>
<div class="a" style="left:355px;top:387px;width:7px;height:320px;background:#333"></div>
<div class="a" style="left:0;top:697px;width:362px;height:10px;background:#333"></div>
<div class="a" style="left:178px;top:705px;width:163px;height:3px;background:#555;border-top:1px solid #888"></div>
</div>
<div class="a" style="left:362px;top:0;width:10px;height:707px;background:#f3f6fa"></div>
<svg class="a" style="left:372px;top:0" width="1228" height="98" viewBox="372 0 1228 98"><defs><linearGradient id="tb" x1="0" y1="0" x2="0" y2="1"><stop offset="0" stop-color="#9bc3a3"/><stop offset="0.5" stop-color="#bbd1c1"/><stop offset="0.92" stop-color="#d8e0e3"/><stop offset="1" stop-color="#d8e0e3"/></linearGradient><radialGradient id="sph" cx="0.35" cy="0.3" r="0.8"><stop offset="0" stop-color="#ffffff"/><stop offset="0.6" stop-color="#dcdcdc"/><stop offset="1" stop-color="#9a9a9a"/></radialGradient><linearGradient id="red" x1="0" y1="0" x2="0" y2="1"><stop offset="0" stop-color="#f7b0b0"/><stop offset="1" stop-color="#e02a2a"/></linearGradient></defs><rect x="372" y="0" width="1228" height="98" fill="#d8e0e3"/><rect x="372" y="0" width="1228" height="2" fill="#b9bdc1"/><rect x="372" y="0" width="1" height="98" fill="#c8ccd0"/><rect x="373" y="25" width="1227" height="40" fill="url(#tb)"/><rect x="379" y="24" width="1221" height="2" fill="#4a4a4a"/><rect x="374" y="7" width="1.2" height="59.5" fill="#7c8084"/><rect x="376.8" y="7" width="1.2" height="59.5" fill="#7c8084"/><path d="M380,24.5 L380,17.5 L387.5,7 L433.5,7 Q437.5,7 437.5,11 L437.5,24.5" fill="#d0e1e7" stroke="#3a3a3a" stroke-width="1.3"/><path d="M432,24.5 L445,7 L503.5,7 Q507.5,7 507.5,11 L507.5,24.5" fill="#d0e1e7" stroke="#3a3a3a" stroke-width="1.3"/><path d="M501.5,25.5 L514.5,7 L564,7 Q568,7 568,11 L568,25.5 Z" fill="#8fbd98" stroke="#3a3a3a" stroke-width="1.3"/><rect x="502.5" y="24" width="65" height="3" fill="#92be9b"/><text x="391" y="21" font-size="14" fill="#1a1a2a" letter-spacing="-0.6">SubD</text><text x="448" y="21" font-size="14" fill="#1a1a2a" letter-spacing="-0.4">Emboss</text><text x="518.5" y="21" font-size="14" fill="#1a1a2a">Sculpt</text><rect x="418" y="30" width="1" height="31" fill="#8aa890"/><circle cx="397" cy="44.5" r="10" fill="url(#sph)" stroke="#6a6a6a" stroke-width="1.1"/><circle cx="439" cy="44.5" r="10" fill="url(#sph)" stroke="#6a6a6a" stroke-width="1.1"/><circle cx="474" cy="44.5" r="10" fill="url(#sph)" stroke="#6a6a6a" stroke-width="1.1"/><circle cx="509" cy="44.5" r="10" fill="url(#sph)" stroke="#6a6a6a" stroke-width="1.1"/><circle cx="544" cy="44.5" r="10" fill="url(#sph)" stroke="#6a6a6a" stroke-width="1.1"/><circle cx="649" cy="44.5" r="10" fill="url(#sph)" stroke="#6a6a6a" stroke-width="1.1"/><path d="M389,50 Q386,42 392,37 Q399,33 405,38 Q406,41 404,42 Q399,38 395,41 Q393,45 399,46 Q406,47 406,51 Q403,56 396,55 Q391,54 389,50 Z" fill="url(#red)" stroke="#8a2020" stroke-width="0.6"/><path d="M433,48 Q441,46 442,37 Q447,33 450,37 Q451,47 444,51 Q438,53 433,48 Z" fill="url(#red)" stroke="#8a2020" stroke-width="0.6"/><path d="M466,49 Q477,45 480,35 Q485,34 485,39 Q483,47 466,49 Z" fill="url(#red)" stroke="#8a2020" stroke-width="0.6"/><path d="M500,37 Q505,34 511,37 Q517,41 519,46 L518,49 Q508,43 500,37 Z" fill="url(#red)" stroke="#8a2020" stroke-width="0.6"/><path d="M540,49 Q546,45 549,38 Q553,34 555,37 Q556,45 548,50 Q543,52 540,49 Z" fill="url(#red)" stroke="#8a2020" stroke-width="0.6"/><path d="M642,42 Q648,36 656,39 Q657,42 654,41 Q648,40 647,43 L652,44 Q657,46 655,49 Q649,53 641,49 Q641,47 644,48 Q650,49 650,47 L646,46 Q641,45 642,42 Z" fill="#dd3030"/><path d="M579,34 Q580.5,40 582,42 Q587,45 586,50 Q585,55 579,55.5 Q573,55 572,50 Q571,45 576,42 Q577.5,40 579,34 Z" fill="url(#sph)" stroke="#666" stroke-width="0.9"/><path d="M569,36.5 L575.5,38.5 L569.5,41 Z M589,36.5 L582.5,38.5 L588.5,41 Z" fill="#e04040"/><path d="M605,40 Q606,35 611,36 Q615,32 620,35 Q625,36 625,41 Q628,45 624,49 Q624,55 618,53 Q614,56 610,53 Q604,53 605,49 Q601,46 604,43 Z" fill="url(#sph)" stroke="#707070" stroke-width="0.9"/><path d="M677,49 Q676,43 682,41 L686,37 Q690,35 691,39 L689,43 Q693,48 690,53 Q686,57 681,56 Q677,54 677,49 Z" fill="url(#sph)" stroke="#6a6a6a" stroke-width="1"/><path d="M688,35 L693,31 L693,37 Z" fill="#e04040"/><rect x="372" y="97.3" width="1228" height="1" fill="#2a2a2a"/><path d="M372.5,97.5 L372.5,84.5 L383,73.5 L464.5,73.5 Q468.5,73.5 468.5,77.5 L468.5,97.5" fill="#d0e1e7" stroke="#3a3a3a" stroke-width="1.3"/><path d="M797.5,97.5 L797.5,84.5 L807.5,73.5 L831,73.5 Q835,73.5 835,77.5 L835,97.5" fill="#dde3e6" stroke="#3a3a3a" stroke-width="1.3"/><path d="M678,97.5 L678,84.5 L688.5,73.5 L793,73.5 Q797,73.5 797,77.5 L797,97.5" fill="#d0e1e7" stroke="#3a3a3a" stroke-width="1.3"/><path d="M593.5,97.5 L593.5,84.5 L603.5,73.5 L673.5,73.5 Q677.5,73.5 677.5,77.5 L677.5,97.5" fill="#d0e1e7" stroke="#3a3a3a" stroke-width="1.3"/><path d="M458.6,97.5 L479.6,73.5 L588.5,73.5 Q592.5,73.5 592.5,77.5 L592.5,97.5 Z" fill="#80b58b" stroke="#3a3a3a" stroke-width="1.3"/><text x="386.5" y="89" font-size="14" fill="#1a1a2a">Perspective</text><text x="484" y="89" font-size="14.5" fill="#1a1a2a" letter-spacing="0.1">Through Finger</text><text x="607.5" y="89" font-size="14" fill="#1a1a2a" letter-spacing="-0.1">Side View</text><text x="693" y="89" font-size="14" fill="#1a1a2a" letter-spacing="0.5">Looking Down</text><path d="M816,81 h4 v3.5 h3.5 v4 h-3.5 v3.5 h-4 v-3.5 h-3.5 v-4 h3.5 Z" fill="none" stroke="#555" stroke-width="1"/></svg>
<svg class="a" style="left:372px;top:98px" width="1228" height="609" viewBox="372 98 1228 609" shape-rendering="crispEdges"><rect x="372" y="98" width="1228" height="609" fill="#000"/><g shape-rendering="crispEdges" style="isolation:isolate"><rect class="gl" x="587" y="98" width="1" height="609" fill="#030303"/><rect class="gl" x="588" y="98" width="1" height="609" fill="#1c1c1c"/><rect class="gl" x="589" y="98" width="1" height="609" fill="#2e2e2e"/><rect class="gl" x="590" y="98" width="1" height="609" fill="#0e0e0e"/><rect class="gl" x="608" y="98" width="1" height="609" fill="#060606"/><rect class="gl" x="609" y="98" width="1" height="609" fill="#232323"/><rect class="gl" x="610" y="98" width="1" height="609" fill="#292929"/><rect class="gl" x="611" y="98" width="1" height="609" fill="#090909"/><rect class="gl" x="629" y="98" width="1" height="609" fill="#090909"/><rect class="gl" x="630" y="98" width="1" height="609" fill="#292929"/><rect class="gl" x="631" y="98" width="1" height="609" fill="#232323"/><rect class="gl" x="632" y="98" width="1" height="609" fill="#060606"/><rect class="gl" x="650" y="98" width="1" height="609" fill="#0e0e0e"/><rect class="gl" x="651" y="98" width="1" height="609" fill="#2e2e2e"/><rect class="gl" x="652" y="98" width="1" height="609" fill="#1c1c1c"/><rect class="gl" x="653" y="98" width="1" height="609" fill="#030303"/><rect class="gl" x="691" y="98" width="1" height="609" fill="#030303"/><rect class="gl" x="692" y="98" width="1" height="609" fill="#1c1c1c"/><rect class="gl" x="693" y="98" width="1" height="609" fill="#2e2e2e"/><rect class="gl" x="694" y="98" width="1" height="609" fill="#0e0e0e"/><rect class="gl" x="712" y="98" width="1" height="609" fill="#060606"/><rect class="gl" x="713" y="98" width="1" height="609" fill="#232323"/><rect class="gl" x="714" y="98" width="1" height="609" fill="#292929"/><rect class="gl" x="715" y="98" width="1" height="609" fill="#090909"/><rect class="gl" x="733" y="98" width="1" height="609" fill="#090909"/><rect class="gl" x="734" y="98" width="1" height="609" fill="#292929"/><rect class="gl" x="735" y="98" width="1" height="609" fill="#232323"/><rect class="gl" x="736" y="98" width="1" height="609" fill="#060606"/><rect class="gl" x="754" y="98" width="1" height="609" fill="#0e0e0e"/><rect class="gl" x="755" y="98" width="1" height="609" fill="#2e2e2e"/><rect class="gl" x="756" y="98" width="1" height="609" fill="#1c1c1c"/><rect class="gl" x="757" y="98" width="1" height="609" fill="#030303"/><rect class="gl" x="795" y="98" width="1" height="609" fill="#030303"/><rect class="gl" x="796" y="98" width="1" height="609" fill="#1c1c1c"/><rect class="gl" x="797" y="98" width="1" height="609" fill="#2e2e2e"/><rect class="gl" x="798" y="98" width="1" height="609" fill="#0e0e0e"/><rect class="gl" x="816" y="98" width="1" height="609" fill="#060606"/><rect class="gl" x="817" y="98" width="1" height="609" fill="#232323"/><rect class="gl" x="818" y="98" width="1" height="609" fill="#292929"/><rect class="gl" x="819" y="98" width="1" height="609" fill="#090909"/><rect class="gl" x="837" y="98" width="1" height="609" fill="#090909"/><rect class="gl" x="838" y="98" width="1" height="609" fill="#292929"/><rect class="gl" x="839" y="98" width="1" height="609" fill="#232323"/><rect class="gl" x="840" y="98" width="1" height="609" fill="#060606"/><rect class="gl" x="858" y="98" width="1" height="609" fill="#0e0e0e"/><rect class="gl" x="859" y="98" width="1" height="609" fill="#2e2e2e"/><rect class="gl" x="860" y="98" width="1" height="609" fill="#1c1c1c"/><rect class="gl" x="861" y="98" width="1" height="609" fill="#030303"/><rect class="gl" x="899" y="98" width="1" height="609" fill="#030303"/><rect class="gl" x="900" y="98" width="1" height="609" fill="#1c1c1c"/><rect class="gl" x="901" y="98" width="1" height="609" fill="#2e2e2e"/><rect class="gl" x="902" y="98" width="1" height="609" fill="#0e0e0e"/><rect class="gl" x="920" y="98" width="1" height="609" fill="#060606"/><rect class="gl" x="921" y="98" width="1" height="609" fill="#232323"/><rect class="gl" x="922" y="98" width="1" height="609" fill="#292929"/><rect class="gl" x="923" y="98" width="1" height="609" fill="#090909"/><rect class="gl" x="941" y="98" width="1" height="609" fill="#090909"/><rect class="gl" x="942" y="98" width="1" height="609" fill="#292929"/><rect class="gl" x="943" y="98" width="1" height="609" fill="#232323"/><rect class="gl" x="944" y="98" width="1" height="609" fill="#060606"/><rect class="gl" x="962" y="98" width="1" height="609" fill="#0e0e0e"/><rect class="gl" x="963" y="98" width="1" height="609" fill="#2e2e2e"/><rect class="gl" x="964" y="98" width="1" height="609" fill="#1c1c1c"/><rect class="gl" x="965" y="98" width="1" height="609" fill="#030303"/><rect class="gl" x="1003" y="98" width="1" height="609" fill="#030303"/><rect class="gl" x="1004" y="98" width="1" height="609" fill="#1c1c1c"/><rect class="gl" x="1005" y="98" width="1" height="609" fill="#2e2e2e"/><rect class="gl" x="1006" y="98" width="1" height="609" fill="#0e0e0e"/><rect class="gl" x="1024" y="98" width="1" height="609" fill="#060606"/><rect class="gl" x="1025" y="98" width="1" height="609" fill="#232323"/><rect class="gl" x="1026" y="98" width="1" height="609" fill="#292929"/><rect class="gl" x="1027" y="98" width="1" height="609" fill="#090909"/><rect class="gl" x="1045" y="98" width="1" height="609" fill="#090909"/><rect class="gl" x="1046" y="98" width="1" height="609" fill="#292929"/><rect class="gl" x="1047" y="98" width="1" height="609" fill="#232323"/><rect class="gl" x="1048" y="98" width="1" height="609" fill="#060606"/><rect class="gl" x="1066" y="98" width="1" height="609" fill="#0e0e0e"/><rect class="gl" x="1067" y="98" width="1" height="609" fill="#2e2e2e"/><rect class="gl" x="1068" y="98" width="1" height="609" fill="#1c1c1c"/><rect class="gl" x="1069" y="98" width="1" height="609" fill="#030303"/><rect class="gl" x="1107" y="98" width="1" height="609" fill="#030303"/><rect class="gl" x="1108" y="98" width="1" height="609" fill="#1c1c1c"/><rect class="gl" x="1109" y="98" width="1" height="609" fill="#2e2e2e"/><rect class="gl" x="1110" y="98" width="1" height="609" fill="#0e0e0e"/><rect class="gl" x="1128" y="98" width="1" height="609" fill="#060606"/><rect class="gl" x="1129" y="98" width="1" height="609" fill="#232323"/><rect class="gl" x="1130" y="98" width="1" height="609" fill="#292929"/><rect class="gl" x="1131" y="98" width="1" height="609" fill="#090909"/><rect class="gl" x="1149" y="98" width="1" height="609" fill="#090909"/><rect class="gl" x="1150" y="98" width="1" height="609" fill="#292929"/><rect class="gl" x="1151" y="98" width="1" height="609" fill="#232323"/><rect class="gl" x="1152" y="98" width="1" height="609" fill="#060606"/><rect class="gl" x="1170" y="98" width="1" height="609" fill="#0e0e0e"/><rect class="gl" x="1171" y="98" width="1" height="609" fill="#2e2e2e"/><rect class="gl" x="1172" y="98" width="1" height="609" fill="#1c1c1c"/><rect class="gl" x="1173" y="98" width="1" height="609" fill="#030303"/><rect class="gl" x="1211" y="98" width="1" height="609" fill="#030303"/><rect class="gl" x="1212" y="98" width="1" height="609" fill="#1c1c1c"/><rect class="gl" x="1213" y="98" width="1" height="609" fill="#2e2e2e"/><rect class="gl" x="1214" y="98" width="1" height="609" fill="#0e0e0e"/><rect class="gl" x="1232" y="98" width="1" height="609" fill="#060606"/><rect class="gl" x="1233" y="98" width="1" height="609" fill="#232323"/><rect class="gl" x="1234" y="98" width="1" height="609" fill="#292929"/><rect class="gl" x="1235" y="98" width="1" height="609" fill="#090909"/><rect class="gl" x="1253" y="98" width="1" height="609" fill="#090909"/><rect class="gl" x="1254" y="98" width="1" height="609" fill="#292929"/><rect class="gl" x="1255" y="98" width="1" height="609" fill="#232323"/><rect class="gl" x="1256" y="98" width="1" height="609" fill="#060606"/><rect class="gl" x="1274" y="98" width="1" height="609" fill="#0e0e0e"/><rect class="gl" x="1275" y="98" width="1" height="609" fill="#2e2e2e"/><rect class="gl" x="1276" y="98" width="1" height="609" fill="#1c1c1c"/><rect class="gl" x="1277" y="98" width="1" height="609" fill="#030303"/><rect class="gl" x="1315" y="98" width="1" height="609" fill="#030303"/><rect class="gl" x="1316" y="98" width="1" height="609" fill="#1c1c1c"/><rect class="gl" x="1317" y="98" width="1" height="609" fill="#2e2e2e"/><rect class="gl" x="1318" y="98" width="1" height="609" fill="#0e0e0e"/><rect class="gl" x="1336" y="98" width="1" height="609" fill="#060606"/><rect class="gl" x="1337" y="98" width="1" height="609" fill="#232323"/><rect class="gl" x="1338" y="98" width="1" height="609" fill="#292929"/><rect class="gl" x="1339" y="98" width="1" height="609" fill="#090909"/><rect class="gl" x="1357" y="98" width="1" height="609" fill="#090909"/><rect class="gl" x="1358" y="98" width="1" height="609" fill="#292929"/><rect class="gl" x="1359" y="98" width="1" height="609" fill="#232323"/><rect class="gl" x="1360" y="98" width="1" height="609" fill="#060606"/><rect class="gl" x="1378" y="98" width="1" height="609" fill="#0e0e0e"/><rect class="gl" x="1379" y="98" width="1" height="609" fill="#2e2e2e"/><rect class="gl" x="1380" y="98" width="1" height="609" fill="#1c1c1c"/><rect class="gl" x="1381" y="98" width="1" height="609" fill="#030303"/><rect class="gl" x="567" y="109" width="835" height="1" fill="#131313"/><rect class="gl" x="567" y="110" width="835" height="1" fill="#323232"/><rect class="gl" x="567" y="111" width="835" height="1" fill="#1a1a1a"/><rect class="gl" x="567" y="130" width="835" height="1" fill="#1a1a1a"/><rect class="gl" x="567" y="131" width="835" height="1" fill="#323232"/><rect class="gl" x="567" y="132" width="835" height="1" fill="#131313"/><rect class="gl" x="567" y="171" width="835" height="1" fill="#080808"/><rect class="gl" x="567" y="172" width="835" height="1" fill="#292929"/><rect class="gl" x="567" y="173" width="835" height="1" fill="#292929"/><rect class="gl" x="567" y="174" width="835" height="1" fill="#080808"/><rect class="gl" x="567" y="192" width="835" height="1" fill="#0c0c0c"/><rect class="gl" x="567" y="193" width="835" height="1" fill="#2f2f2f"/><rect class="gl" x="567" y="194" width="835" height="1" fill="#222222"/><rect class="gl" x="567" y="195" width="835" height="1" fill="#050505"/><rect class="gl" x="567" y="213" width="835" height="1" fill="#131313"/><rect class="gl" x="567" y="214" width="835" height="1" fill="#323232"/><rect class="gl" x="567" y="215" width="835" height="1" fill="#1a1a1a"/><rect class="gl" x="567" y="234" width="835" height="1" fill="#1a1a1a"/><rect class="gl" x="567" y="235" width="835" height="1" fill="#323232"/><rect class="gl" x="567" y="236" width="835" height="1" fill="#131313"/><rect class="gl" x="567" y="275" width="835" height="1" fill="#080808"/><rect class="gl" x="567" y="276" width="835" height="1" fill="#292929"/><rect class="gl" x="567" y="277" width="835" height="1" fill="#292929"/><rect class="gl" x="567" y="278" width="835" height="1" fill="#080808"/><rect class="gl" x="567" y="296" width="835" height="1" fill="#0c0c0c"/><rect class="gl" x="567" y="297" width="835" height="1" fill="#2f2f2f"/><rect class="gl" x="567" y="298" width="835" height="1" fill="#222222"/><rect class="gl" x="567" y="299" width="835" height="1" fill="#050505"/><rect class="gl" x="567" y="317" width="835" height="1" fill="#131313"/><rect class="gl" x="567" y="318" width="835" height="1" fill="#323232"/><rect class="gl" x="567" y="319" width="835" height="1" fill="#1a1a1a"/><rect class="gl" x="567" y="338" width="835" height="1" fill="#1a1a1a"/><rect class="gl" x="567" y="339" width="835" height="1" fill="#323232"/><rect class="gl" x="567" y="340" width="835" height="1" fill="#131313"/><rect class="gl" x="567" y="379" width="835" height="1" fill="#080808"/><rect class="gl" x="567" y="380" width="835" height="1" fill="#292929"/><rect class="gl" x="567" y="381" width="835" height="1" fill="#292929"/><rect class="gl" x="567" y="382" width="835" height="1" fill="#080808"/><rect class="gl" x="567" y="400" width="835" height="1" fill="#0c0c0c"/><rect class="gl" x="567" y="401" width="835" height="1" fill="#2f2f2f"/><rect class="gl" x="567" y="402" width="835" height="1" fill="#222222"/><rect class="gl" x="567" y="403" width="835" height="1" fill="#050505"/><rect class="gl" x="567" y="421" width="835" height="1" fill="#131313"/><rect class="gl" x="567" y="422" width="835" height="1" fill="#323232"/><rect class="gl" x="567" y="423" width="835" height="1" fill="#1a1a1a"/><rect class="gl" x="567" y="442" width="835" height="1" fill="#1a1a1a"/><rect class="gl" x="567" y="443" width="835" height="1" fill="#323232"/><rect class="gl" x="567" y="444" width="835" height="1" fill="#131313"/><rect class="gl" x="567" y="483" width="835" height="1" fill="#080808"/><rect class="gl" x="567" y="484" width="835" height="1" fill="#292929"/><rect class="gl" x="567" y="485" width="835" height="1" fill="#292929"/><rect class="gl" x="567" y="486" width="835" height="1" fill="#080808"/><rect class="gl" x="567" y="504" width="835" height="1" fill="#0c0c0c"/><rect class="gl" x="567" y="505" width="835" height="1" fill="#2f2f2f"/><rect class="gl" x="567" y="506" width="835" height="1" fill="#222222"/><rect class="gl" x="567" y="507" width="835" height="1" fill="#050505"/><rect class="gl" x="567" y="525" width="835" height="1" fill="#131313"/><rect class="gl" x="567" y="526" width="835" height="1" fill="#323232"/><rect class="gl" x="567" y="527" width="835" height="1" fill="#1a1a1a"/><rect class="gl" x="567" y="546" width="835" height="1" fill="#1a1a1a"/><rect class="gl" x="567" y="547" width="835" height="1" fill="#323232"/><rect class="gl" x="567" y="548" width="835" height="1" fill="#131313"/><rect class="gl" x="567" y="587" width="835" height="1" fill="#080808"/><rect class="gl" x="567" y="588" width="835" height="1" fill="#292929"/><rect class="gl" x="567" y="589" width="835" height="1" fill="#292929"/><rect class="gl" x="567" y="590" width="835" height="1" fill="#080808"/><rect class="gl" x="567" y="608" width="835" height="1" fill="#0c0c0c"/><rect class="gl" x="567" y="609" width="835" height="1" fill="#2f2f2f"/><rect class="gl" x="567" y="610" width="835" height="1" fill="#222222"/><rect class="gl" x="567" y="611" width="835" height="1" fill="#050505"/><rect class="gl" x="567" y="629" width="835" height="1" fill="#131313"/><rect class="gl" x="567" y="630" width="835" height="1" fill="#323232"/><rect class="gl" x="567" y="631" width="835" height="1" fill="#1a1a1a"/><rect class="gl" x="567" y="650" width="835" height="1" fill="#1a1a1a"/><rect class="gl" x="567" y="651" width="835" height="1" fill="#323232"/><rect class="gl" x="567" y="652" width="835" height="1" fill="#131313"/><rect class="gl" x="567" y="691" width="835" height="1" fill="#080808"/><rect class="gl" x="567" y="692" width="835" height="1" fill="#292929"/><rect class="gl" x="567" y="693" width="835" height="1" fill="#292929"/><rect class="gl" x="567" y="694" width="835" height="1" fill="#080808"/><rect class="gl" x="566" y="98" width="1" height="609" fill="#030303"/><rect class="gl" x="567" y="98" width="1" height="609" fill="#292929"/><rect class="gl" x="568" y="98" width="1" height="609" fill="#5c5c5c"/><rect class="gl" x="569" y="98" width="1" height="609" fill="#292929"/><rect class="gl" x="570" y="98" width="1" height="609" fill="#030303"/><rect class="gl" x="670" y="98" width="1" height="609" fill="#030303"/><rect class="gl" x="671" y="98" width="1" height="609" fill="#292929"/><rect class="gl" x="672" y="98" width="1" height="609" fill="#5c5c5c"/><rect class="gl" x="673" y="98" width="1" height="609" fill="#292929"/><rect class="gl" x="674" y="98" width="1" height="609" fill="#030303"/><rect class="gl" x="774" y="98" width="1" height="609" fill="#030303"/><rect class="gl" x="775" y="98" width="1" height="609" fill="#292929"/><rect class="gl" x="776" y="98" width="1" height="609" fill="#5c5c5c"/><rect class="gl" x="777" y="98" width="1" height="609" fill="#292929"/><rect class="gl" x="778" y="98" width="1" height="609" fill="#030303"/><rect class="gl" x="878" y="98" width="1" height="609" fill="#030303"/><rect class="gl" x="879" y="98" width="1" height="609" fill="#292929"/><rect class="gl" x="880" y="98" width="1" height="609" fill="#5c5c5c"/><rect class="gl" x="881" y="98" width="1" height="609" fill="#292929"/><rect class="gl" x="882" y="98" width="1" height="609" fill="#030303"/><rect class="gl" x="982" y="98" width="1" height="609" fill="#030303"/><rect class="gl" x="983" y="98" width="1" height="609" fill="#292929"/><rect class="gl" x="984" y="98" width="1" height="609" fill="#5c5c5c"/><rect class="gl" x="985" y="98" width="1" height="609" fill="#292929"/><rect class="gl" x="986" y="98" width="1" height="609" fill="#030303"/><rect class="gl" x="1086" y="98" width="1" height="609" fill="#030303"/><rect class="gl" x="1087" y="98" width="1" height="609" fill="#292929"/><rect class="gl" x="1088" y="98" width="1" height="609" fill="#5c5c5c"/><rect class="gl" x="1089" y="98" width="1" height="609" fill="#292929"/><rect class="gl" x="1090" y="98" width="1" height="609" fill="#030303"/><rect class="gl" x="1190" y="98" width="1" height="609" fill="#030303"/><rect class="gl" x="1191" y="98" width="1" height="609" fill="#292929"/><rect class="gl" x="1192" y="98" width="1" height="609" fill="#5c5c5c"/><rect class="gl" x="1193" y="98" width="1" height="609" fill="#292929"/><rect class="gl" x="1194" y="98" width="1" height="609" fill="#030303"/><rect class="gl" x="1294" y="98" width="1" height="609" fill="#030303"/><rect class="gl" x="1295" y="98" width="1" height="609" fill="#292929"/><rect class="gl" x="1296" y="98" width="1" height="609" fill="#5c5c5c"/><rect class="gl" x="1297" y="98" width="1" height="609" fill="#292929"/><rect class="gl" x="1298" y="98" width="1" height="609" fill="#030303"/><rect class="gl" x="1398" y="98" width="1" height="609" fill="#030303"/><rect class="gl" x="1399" y="98" width="1" height="609" fill="#292929"/><rect class="gl" x="1400" y="98" width="1" height="609" fill="#5c5c5c"/><rect class="gl" x="1401" y="98" width="1" height="609" fill="#292929"/><rect class="gl" x="1402" y="98" width="1" height="609" fill="#030303"/><rect class="gl" x="567" y="150" width="835" height="1" fill="#090909"/><rect class="gl" x="567" y="151" width="835" height="1" fill="#434343"/><rect class="gl" x="567" y="152" width="835" height="1" fill="#5d5d5d"/><rect class="gl" x="567" y="153" width="835" height="1" fill="#191919"/><rect class="gl" x="567" y="254" width="835" height="1" fill="#090909"/><rect class="gl" x="567" y="255" width="835" height="1" fill="#434343"/><rect class="gl" x="567" y="256" width="835" height="1" fill="#5d5d5d"/><rect class="gl" x="567" y="257" width="835" height="1" fill="#191919"/><rect class="gl" x="567" y="358" width="835" height="1" fill="#090909"/><rect class="gl" x="567" y="359" width="835" height="1" fill="#434343"/><rect class="gl" x="567" y="360" width="835" height="1" fill="#5d5d5d"/><rect class="gl" x="567" y="361" width="835" height="1" fill="#191919"/><rect class="gl" x="567" y="462" width="835" height="1" fill="#090909"/><rect class="gl" x="567" y="463" width="835" height="1" fill="#434343"/><rect class="gl" x="567" y="464" width="835" height="1" fill="#5d5d5d"/><rect class="gl" x="567" y="465" width="835" height="1" fill="#191919"/><rect class="gl" x="567" y="566" width="835" height="1" fill="#090909"/><rect class="gl" x="567" y="567" width="835" height="1" fill="#434343"/><rect class="gl" x="567" y="568" width="835" height="1" fill="#5d5d5d"/><rect class="gl" x="567" y="569" width="835" height="1" fill="#191919"/><rect class="gl" x="567" y="670" width="835" height="1" fill="#090909"/><rect class="gl" x="567" y="671" width="835" height="1" fill="#434343"/><rect class="gl" x="567" y="672" width="835" height="1" fill="#5d5d5d"/><rect class="gl" x="567" y="673" width="835" height="1" fill="#191919"/></g><g shape-rendering="auto"><g shape-rendering="auto" fill="none"><line x1="672" y1="166" x2="1037" y2="166" stroke="#0f7a4c" stroke-width="1.6"/><line x1="671" y1="674.5" x2="1027" y2="674.5" stroke="#0f7a4c" stroke-width="2"/><line x1="681.3" y1="180" x2="681.3" y2="660" stroke="#0f7a4c" stroke-width="1.6"/><path d="M681.3,166.5 L676,188 L686.6,188 Z" fill="#0f7a4c" stroke="none"/><path d="M681.3,673 L676,651 L686.6,651 Z" fill="#0f7a4c" stroke="none"/><line x1="787.5" y1="258" x2="787.5" y2="707" stroke="#0f7a4c" stroke-width="1.5"/><line x1="1190" y1="258" x2="1190" y2="707" stroke="#0f7a4c" stroke-width="1.5"/><text x="0" y="0" transform="translate(676,455.5) rotate(-90)" font-size="28.5" fill="#0f7a4c" stroke="#0f7a4c" stroke-width="0.9">24.48</text><text x="957" y="720.5" font-size="28.5" fill="#0f7a4c" stroke="#0f7a4c" stroke-width="0.9">19.97</text><line x1="984.5" y1="98" x2="984.5" y2="464" stroke="#1aa3c4" stroke-width="1.6"/><line x1="984" y1="463.8" x2="1400" y2="463.8" stroke="#d21a0a" stroke-width="2.2"/><line x1="1163" y1="463.8" x2="1191" y2="463.8" stroke="#6e5a2e" stroke-width="2.2"/><circle cx="984.3" cy="464" r="178.6" stroke="#0b925e" stroke-width="2"/><circle cx="984.3" cy="464.5" r="185.8" stroke="#0c6e48" stroke-width="1.1"/><circle cx="984.3" cy="465" r="192.5" stroke="#0b925e" stroke-width="2"/><ellipse cx="984.3" cy="466" rx="205" ry="207" stroke="#0d7a50" stroke-width="1.2"/><line x1="1028.4" y1="290.9" x2="1035.2" y2="266.4" stroke="#0f7a4c" stroke-width="1.1"/><line x1="940.2" y1="290.9" x2="933.4" y2="266.4" stroke="#0f7a4c" stroke-width="1.1"/><line x1="1060.6" y1="302.5" x2="1072.3" y2="279.8" stroke="#0f7a4c" stroke-width="1.1"/><line x1="908.0" y1="302.5" x2="896.3" y2="279.8" stroke="#0f7a4c" stroke-width="1.1"/><line x1="1089.3" y1="319.5" x2="1105.4" y2="299.3" stroke="#0f7a4c" stroke-width="1.1"/><line x1="879.3" y1="319.5" x2="863.2" y2="299.3" stroke="#0f7a4c" stroke-width="1.1"/><line x1="1116.2" y1="343.6" x2="1136.4" y2="327.1" stroke="#0f7a4c" stroke-width="1.1"/><line x1="852.4" y1="343.6" x2="832.2" y2="327.1" stroke="#0f7a4c" stroke-width="1.1"/><line x1="1137.1" y1="371.5" x2="1160.5" y2="359.3" stroke="#0f7a4c" stroke-width="1.1"/><line x1="831.5" y1="371.5" x2="808.1" y2="359.3" stroke="#0f7a4c" stroke-width="1.1"/><line x1="1152.1" y1="402.9" x2="1177.9" y2="395.5" stroke="#0f7a4c" stroke-width="1.1"/><line x1="816.5" y1="402.9" x2="790.7" y2="395.5" stroke="#0f7a4c" stroke-width="1.1"/><line x1="1160.3" y1="433.6" x2="1187.3" y2="430.9" stroke="#0f7a4c" stroke-width="1.1"/><line x1="808.3" y1="433.6" x2="781.3" y2="430.9" stroke="#0f7a4c" stroke-width="1.1"/><line x1="1162.9" y1="464.0" x2="1190.3" y2="466.0" stroke="#0f7a4c" stroke-width="1.1"/><line x1="805.7" y1="464.0" x2="778.3" y2="466.0" stroke="#0f7a4c" stroke-width="1.1"/><line x1="1160.0" y1="496.2" x2="1186.9" y2="503.2" stroke="#0f7a4c" stroke-width="1.1"/><line x1="808.6" y1="496.2" x2="781.7" y2="503.2" stroke="#0f7a4c" stroke-width="1.1"/><line x1="1150.6" y1="529.2" x2="1176.1" y2="541.2" stroke="#0f7a4c" stroke-width="1.1"/><line x1="818.0" y1="529.2" x2="792.5" y2="541.2" stroke="#0f7a4c" stroke-width="1.1"/><line x1="1134.8" y1="560.2" x2="1157.8" y2="577.0" stroke="#0f7a4c" stroke-width="1.1"/><line x1="833.8" y1="560.2" x2="810.8" y2="577.0" stroke="#0f7a4c" stroke-width="1.1"/><line x1="1112.1" y1="588.7" x2="1131.7" y2="609.9" stroke="#0f7a4c" stroke-width="1.1"/><line x1="856.5" y1="588.7" x2="836.9" y2="609.9" stroke="#0f7a4c" stroke-width="1.1"/><line x1="1083.1" y1="612.8" x2="1098.3" y2="637.6" stroke="#0f7a4c" stroke-width="1.1"/><line x1="885.5" y1="612.8" x2="870.3" y2="637.6" stroke="#0f7a4c" stroke-width="1.1"/><line x1="1049.5" y1="630.3" x2="1059.5" y2="657.8" stroke="#0f7a4c" stroke-width="1.1"/><line x1="919.1" y1="630.3" x2="909.1" y2="657.8" stroke="#0f7a4c" stroke-width="1.1"/><line x1="1017.8" y1="639.4" x2="1022.9" y2="668.4" stroke="#0f7a4c" stroke-width="1.1"/><line x1="950.8" y1="639.4" x2="945.7" y2="668.4" stroke="#0f7a4c" stroke-width="1.1"/><line x1="1000.8" y1="641.8" x2="1003.3" y2="671.1" stroke="#0f7a4c" stroke-width="1.1"/><line x1="967.8" y1="641.8" x2="965.3" y2="671.1" stroke="#0f7a4c" stroke-width="1.1"/><g shape-rendering="auto" fill="none"><line x1="984.5" y1="98" x2="984.5" y2="464" stroke="#1aa3c4" stroke-width="1.6"/><path d="M808,259 Q833,243 873,232 Q900,226 915,227 Q931,231 925,242 Q890,255 845,264 Q820,269 808,259 Z" fill="#4677d6"/><path d="M961,245 Q948,231 928,230 Q908,231 905,243 Q905,258 925,262 Q948,263 961,245 Z" fill="#4677d6"/><circle cx="840" cy="252" r="1.1" fill="#1a3050"/><circle cx="860" cy="247" r="1.1" fill="#1a3050"/><circle cx="880" cy="243" r="1.1" fill="#1a3050"/><circle cx="900" cy="240" r="1.1" fill="#1a3050"/><circle cx="850" cy="258" r="1.1" fill="#1a3050"/><circle cx="875" cy="253" r="1.1" fill="#1a3050"/><circle cx="895" cy="250" r="1.1" fill="#1a3050"/><circle cx="920" cy="240" r="1.1" fill="#1a3050"/><circle cx="935" cy="250" r="1.1" fill="#1a3050"/><circle cx="915" cy="252" r="1.1" fill="#1a3050"/><circle cx="945" cy="246" r="1.1" fill="#1a3050"/><circle cx="930" cy="238" r="1.1" fill="#1a3050"/><path d="M808,266 Q850,256 905,250 L962,252 L968,262 L968,276 L806,276 Z" fill="#0f8a52" fill-opacity="0.45"/><path d="M812,267 Q860,254 905,250 L960,253" stroke="#0f8a52" stroke-width="2.2" fill="none"/><path d="M816,262 Q860,250 903,245" stroke="#0f8a52" stroke-width="1" fill="none"/><path d="M805,264 L960,262" stroke="#0f8a52" stroke-width="1.2" fill="none"/><line x1="812" y1="262.0" x2="814" y2="272" stroke="#0f8a52" stroke-width="1"/><line x1="820" y1="261.3" x2="822" y2="272" stroke="#0f8a52" stroke-width="1"/><line x1="828" y1="260.6" x2="830" y2="272" stroke="#0f8a52" stroke-width="1"/><line x1="836" y1="259.8" x2="838" y2="272" stroke="#0f8a52" stroke-width="1"/><line x1="844" y1="259.1" x2="846" y2="272" stroke="#0f8a52" stroke-width="1"/><line x1="852" y1="258.4" x2="854" y2="272" stroke="#0f8a52" stroke-width="1"/><line x1="860" y1="257.7" x2="862" y2="272" stroke="#0f8a52" stroke-width="1"/><line x1="868" y1="257.0" x2="870" y2="272" stroke="#0f8a52" stroke-width="1"/><line x1="876" y1="256.2" x2="878" y2="272" stroke="#0f8a52" stroke-width="1"/><line x1="884" y1="255.5" x2="886" y2="272" stroke="#0f8a52" stroke-width="1"/><line x1="892" y1="254.8" x2="894" y2="272" stroke="#0f8a52" stroke-width="1"/><line x1="900" y1="254.1" x2="902" y2="272" stroke="#0f8a52" stroke-width="1"/><line x1="908" y1="253.4" x2="910" y2="272" stroke="#0f8a52" stroke-width="1"/><line x1="916" y1="252.6" x2="918" y2="272" stroke="#0f8a52" stroke-width="1"/><line x1="924" y1="251.9" x2="926" y2="272" stroke="#0f8a52" stroke-width="1"/><line x1="932" y1="251.2" x2="934" y2="272" stroke="#0f8a52" stroke-width="1"/><line x1="940" y1="250.5" x2="942" y2="272" stroke="#0f8a52" stroke-width="1"/><line x1="948" y1="249.8" x2="950" y2="272" stroke="#0f8a52" stroke-width="1"/><line x1="956" y1="249.0" x2="958" y2="272" stroke="#0f8a52" stroke-width="1"/><line x1="964" y1="248.3" x2="966" y2="272" stroke="#0f8a52" stroke-width="1"/><path d="M810,270 L968,270 L968,275 L812,275 Z" fill="#0f8a52" fill-opacity="0.6"/><line x1="788" y1="259.5" x2="830" y2="259.5" stroke="#0f8a52" stroke-width="1.2"/><line x1="788" y1="265.5" x2="990" y2="265.5" stroke="#0f8a52" stroke-width="1.8"/><line x1="795" y1="271" x2="990" y2="271" stroke="#0f8a52" stroke-width="2.4"/><path d="M796,266 l5,-4 v8 Z" fill="none" stroke="#0f8a52" stroke-width="1"/><g transform="rotate(-14 818 250)"><path d="M801,262 L801,236 Q801,230 808,230 L812,230 Q818,230 818,236 L818,262" stroke="#0f8a52" stroke-width="1.3" fill="none"/><line x1="801" y1="237" x2="818" y2="237" stroke="#0f8a52"/></g><g transform="rotate(-14 830 250)"><path d="M818,266 L818,236 Q818,229 825,229 L831,229 Q838,229 838,236 L838,266" stroke="#0f8a52" stroke-width="1.6" fill="none"/><line x1="818" y1="236" x2="838" y2="236" stroke="#0f8a52" stroke-width="1.5"/><line x1="824" y1="233" x2="824" y2="266" stroke="#0f8a52"/><line x1="831" y1="233" x2="831" y2="266" stroke="#0f8a52"/></g><path d="M876,268 L876,236 L879.5,228 L883,236 L883,268" stroke="#0f8a52" stroke-width="1.4" fill="none"/><path d="M902,274 L902,240 Q902,233 910,233 Q918,233 918,240 L918,274" stroke="#0f8a52" stroke-width="1.6" fill="none"/><line x1="906" y1="236" x2="906" y2="274" stroke="#0f8a52"/><line x1="913" y1="236" x2="913" y2="274" stroke="#0f8a52"/><line x1="902" y1="241" x2="918" y2="241" stroke="#0f8a52"/><g transform="rotate(-10 910 225)"><path d="M898,242 L898,214 Q898,208 906,208 L914,208 Q921,208 921,214 L921,242" stroke="#0f8a52" stroke-width="1.6" fill="none"/><line x1="898" y1="214" x2="921" y2="214" stroke="#0f8a52" stroke-width="1.3"/><line x1="906" y1="212" x2="906" y2="242" stroke="#0f8a52"/><line x1="913" y1="212" x2="913" y2="242" stroke="#0f8a52"/></g><path d="M929,240 L929,227 Q933,220 937,227 L937,240" stroke="#0f8a52" stroke-width="1.2" fill="none"/><path d="M932.5,214 L932.5,178 Q932.5,166.5 945,166.5 Q957.5,166.5 957.5,178 L957.5,214" stroke="#0f8a52" stroke-width="1.5" fill="none"/><line x1="932.5" y1="175.5" x2="957.5" y2="175.5" stroke="#0f8a52" stroke-width="1.2"/><line x1="939" y1="169" x2="939" y2="214" stroke="#0f8a52" stroke-width="0.9"/><line x1="951" y1="169" x2="951" y2="214" stroke="#0f8a52" stroke-width="0.9"/><line x1="945" y1="166" x2="945" y2="214" stroke="#0f8a52" stroke-width="1.2"/><path d="M958,198 L988,198 L988,214 L938,214 Z" fill="#4677d6" fill-opacity="0.92"/><line x1="958" y1="198" x2="944" y2="214" stroke="#0a1430" stroke-width="0.9"/><line x1="962" y1="198" x2="936" y2="214" stroke="#0a1430" stroke-width="0.9"/><line x1="966" y1="198" x2="957" y2="214" stroke="#0a1430" stroke-width="0.9"/><line x1="970" y1="198" x2="949" y2="214" stroke="#0a1430" stroke-width="0.9"/><line x1="974" y1="198" x2="970" y2="214" stroke="#0a1430" stroke-width="0.9"/><line x1="978" y1="198" x2="962" y2="214" stroke="#0a1430" stroke-width="0.9"/><line x1="982" y1="198" x2="983" y2="214" stroke="#0a1430" stroke-width="0.9"/><line x1="986" y1="198" x2="975" y2="214" stroke="#0a1430" stroke-width="0.9"/><path d="M950,205 L988,205" stroke="#0a1430" stroke-width="0.7"/><line x1="940" y1="217" x2="975" y2="252" stroke="#4677d6" stroke-width="1.1"/><line x1="947" y1="217" x2="977" y2="252" stroke="#4677d6" stroke-width="1.1"/><line x1="954" y1="217" x2="979" y2="252" stroke="#4677d6" stroke-width="1.1"/><line x1="961" y1="217" x2="981" y2="252" stroke="#4677d6" stroke-width="1.1"/><line x1="968" y1="217" x2="983" y2="252" stroke="#4677d6" stroke-width="1.1"/><line x1="975" y1="217" x2="985" y2="252" stroke="#4677d6" stroke-width="1.1"/><line x1="982" y1="217" x2="987" y2="252" stroke="#4677d6" stroke-width="1.1"/><line x1="955" y1="215" x2="988" y2="215" stroke="#9a6040" stroke-width="1.6"/><path d="M937,218.5 L988,218.5" stroke="#0f8a52" stroke-width="2.4" fill="none"/><path d="M940,214 Q948,206 957,214 M958,216 L958,240 M948,218 L948,240" stroke="#0f8a52" stroke-width="1.6" fill="none"/><rect x="969" y="267" width="19" height="18" fill="#0f8a52"/><line x1="971" y1="270" x2="971" y2="284" stroke="#a8a030" stroke-width="0.8" stroke-dasharray="2,2"/><line x1="960" y1="275" x2="960" y2="290" stroke="#0f8a52" stroke-width="1"/><line x1="964" y1="275" x2="964" y2="290" stroke="#0f8a52" stroke-width="1"/><g transform="translate(1975,0) scale(-1,1)"><path d="M808,259 Q833,243 873,232 Q900,226 915,227 Q931,231 925,242 Q890,255 845,264 Q820,269 808,259 Z" fill="#4677d6"/><path d="M961,245 Q948,231 928,230 Q908,231 905,243 Q905,258 925,262 Q948,263 961,245 Z" fill="#4677d6"/><circle cx="840" cy="252" r="1.1" fill="#1a3050"/><circle cx="860" cy="247" r="1.1" fill="#1a3050"/><circle cx="880" cy="243" r="1.1" fill="#1a3050"/><circle cx="900" cy="240" r="1.1" fill="#1a3050"/><circle cx="850" cy="258" r="1.1" fill="#1a3050"/><circle cx="875" cy="253" r="1.1" fill="#1a3050"/><circle cx="895" cy="250" r="1.1" fill="#1a3050"/><circle cx="920" cy="240" r="1.1" fill="#1a3050"/><circle cx="935" cy="250" r="1.1" fill="#1a3050"/><circle cx="915" cy="252" r="1.1" fill="#1a3050"/><circle cx="945" cy="246" r="1.1" fill="#1a3050"/><circle cx="930" cy="238" r="1.1" fill="#1a3050"/><path d="M808,266 Q850,256 905,250 L962,252 L968,262 L968,276 L806,276 Z" fill="#0f8a52" fill-opacity="0.45"/><path d="M812,267 Q860,254 905,250 L960,253" stroke="#0f8a52" stroke-width="2.2" fill="none"/><path d="M816,262 Q860,250 903,245" stroke="#0f8a52" stroke-width="1" fill="none"/><path d="M805,264 L960,262" stroke="#0f8a52" stroke-width="1.2" fill="none"/><line x1="812" y1="262.0" x2="814" y2="272" stroke="#0f8a52" stroke-width="1"/><line x1="820" y1="261.3" x2="822" y2="272" stroke="#0f8a52" stroke-width="1"/><line x1="828" y1="260.6" x2="830" y2="272" stroke="#0f8a52" stroke-width="1"/><line x1="836" y1="259.8" x2="838" y2="272" stroke="#0f8a52" stroke-width="1"/><line x1="844" y1="259.1" x2="846" y2="272" stroke="#0f8a52" stroke-width="1"/><line x1="852" y1="258.4" x2="854" y2="272" stroke="#0f8a52" stroke-width="1"/><line x1="860" y1="257.7" x2="862" y2="272" stroke="#0f8a52" stroke-width="1"/><line x1="868" y1="257.0" x2="870" y2="272" stroke="#0f8a52" stroke-width="1"/><line x1="876" y1="256.2" x2="878" y2="272" stroke="#0f8a52" stroke-width="1"/><line x1="884" y1="255.5" x2="886" y2="272" stroke="#0f8a52" stroke-width="1"/><line x1="892" y1="254.8" x2="894" y2="272" stroke="#0f8a52" stroke-width="1"/><line x1="900" y1="254.1" x2="902" y2="272" stroke="#0f8a52" stroke-width="1"/><line x1="908" y1="253.4" x2="910" y2="272" stroke="#0f8a52" stroke-width="1"/><line x1="916" y1="252.6" x2="918" y2="272" stroke="#0f8a52" stroke-width="1"/><line x1="924" y1="251.9" x2="926" y2="272" stroke="#0f8a52" stroke-width="1"/><line x1="932" y1="251.2" x2="934" y2="272" stroke="#0f8a52" stroke-width="1"/><line x1="940" y1="250.5" x2="942" y2="272" stroke="#0f8a52" stroke-width="1"/><line x1="948" y1="249.8" x2="950" y2="272" stroke="#0f8a52" stroke-width="1"/><line x1="956" y1="249.0" x2="958" y2="272" stroke="#0f8a52" stroke-width="1"/><line x1="964" y1="248.3" x2="966" y2="272" stroke="#0f8a52" stroke-width="1"/><path d="M810,270 L968,270 L968,275 L812,275 Z" fill="#0f8a52" fill-opacity="0.6"/><line x1="788" y1="259.5" x2="830" y2="259.5" stroke="#0f8a52" stroke-width="1.2"/><line x1="788" y1="265.5" x2="990" y2="265.5" stroke="#0f8a52" stroke-width="1.8"/><line x1="795" y1="271" x2="990" y2="271" stroke="#0f8a52" stroke-width="2.4"/><path d="M796,266 l5,-4 v8 Z" fill="none" stroke="#0f8a52" stroke-width="1"/><g transform="rotate(-14 818 250)"><path d="M801,262 L801,236 Q801,230 808,230 L812,230 Q818,230 818,236 L818,262" stroke="#0f8a52" stroke-width="1.3" fill="none"/><line x1="801" y1="237" x2="818" y2="237" stroke="#0f8a52"/></g><g transform="rotate(-14 830 250)"><path d="M818,266 L818,236 Q818,229 825,229 L831,229 Q838,229 838,236 L838,266" stroke="#0f8a52" stroke-width="1.6" fill="none"/><line x1="818" y1="236" x2="838" y2="236" stroke="#0f8a52" stroke-width="1.5"/><line x1="824" y1="233" x2="824" y2="266" stroke="#0f8a52"/><line x1="831" y1="233" x2="831" y2="266" stroke="#0f8a52"/></g><path d="M876,268 L876,236 L879.5,228 L883,236 L883,268" stroke="#0f8a52" stroke-width="1.4" fill="none"/><path d="M902,274 L902,240 Q902,233 910,233 Q918,233 918,240 L918,274" stroke="#0f8a52" stroke-width="1.6" fill="none"/><line x1="906" y1="236" x2="906" y2="274" stroke="#0f8a52"/><line x1="913" y1="236" x2="913" y2="274" stroke="#0f8a52"/><line x1="902" y1="241" x2="918" y2="241" stroke="#0f8a52"/><g transform="rotate(-10 910 225)"><path d="M898,242 L898,214 Q898,208 906,208 L914,208 Q921,208 921,214 L921,242" stroke="#0f8a52" stroke-width="1.6" fill="none"/><line x1="898" y1="214" x2="921" y2="214" stroke="#0f8a52" stroke-width="1.3"/><line x1="906" y1="212" x2="906" y2="242" stroke="#0f8a52"/><line x1="913" y1="212" x2="913" y2="242" stroke="#0f8a52"/></g><path d="M929,240 L929,227 Q933,220 937,227 L937,240" stroke="#0f8a52" stroke-width="1.2" fill="none"/><path d="M932.5,214 L932.5,178 Q932.5,166.5 945,166.5 Q957.5,166.5 957.5,178 L957.5,214" stroke="#0f8a52" stroke-width="1.5" fill="none"/><line x1="932.5" y1="175.5" x2="957.5" y2="175.5" stroke="#0f8a52" stroke-width="1.2"/><line x1="939" y1="169" x2="939" y2="214" stroke="#0f8a52" stroke-width="0.9"/><line x1="951" y1="169" x2="951" y2="214" stroke="#0f8a52" stroke-width="0.9"/><line x1="945" y1="166" x2="945" y2="214" stroke="#0f8a52" stroke-width="1.2"/><path d="M958,198 L988,198 L988,214 L938,214 Z" fill="#4677d6" fill-opacity="0.92"/><line x1="958" y1="198" x2="944" y2="214" stroke="#0a1430" stroke-width="0.9"/><line x1="962" y1="198" x2="936" y2="214" stroke="#0a1430" stroke-width="0.9"/><line x1="966" y1="198" x2="957" y2="214" stroke="#0a1430" stroke-width="0.9"/><line x1="970" y1="198" x2="949" y2="214" stroke="#0a1430" stroke-width="0.9"/><line x1="974" y1="198" x2="970" y2="214" stroke="#0a1430" stroke-width="0.9"/><line x1="978" y1="198" x2="962" y2="214" stroke="#0a1430" stroke-width="0.9"/><line x1="982" y1="198" x2="983" y2="214" stroke="#0a1430" stroke-width="0.9"/><line x1="986" y1="198" x2="975" y2="214" stroke="#0a1430" stroke-width="0.9"/><path d="M950,205 L988,205" stroke="#0a1430" stroke-width="0.7"/><line x1="940" y1="217" x2="975" y2="252" stroke="#4677d6" stroke-width="1.1"/><line x1="947" y1="217" x2="977" y2="252" stroke="#4677d6" stroke-width="1.1"/><line x1="954" y1="217" x2="979" y2="252" stroke="#4677d6" stroke-width="1.1"/><line x1="961" y1="217" x2="981" y2="252" stroke="#4677d6" stroke-width="1.1"/><line x1="968" y1="217" x2="983" y2="252" stroke="#4677d6" stroke-width="1.1"/><line x1="975" y1="217" x2="985" y2="252" stroke="#4677d6" stroke-width="1.1"/><line x1="982" y1="217" x2="987" y2="252" stroke="#4677d6" stroke-width="1.1"/><line x1="955" y1="215" x2="988" y2="215" stroke="#9a6040" stroke-width="1.6"/><path d="M937,218.5 L988,218.5" stroke="#0f8a52" stroke-width="2.4" fill="none"/><path d="M940,214 Q948,206 957,214 M958,216 L958,240 M948,218 L948,240" stroke="#0f8a52" stroke-width="1.6" fill="none"/><rect x="969" y="267" width="19" height="18" fill="#0f8a52"/><line x1="971" y1="270" x2="971" y2="284" stroke="#a8a030" stroke-width="0.8" stroke-dasharray="2,2"/><line x1="960" y1="275" x2="960" y2="290" stroke="#0f8a52" stroke-width="1"/><line x1="964" y1="275" x2="964" y2="290" stroke="#0f8a52" stroke-width="1"/></g><path d="M960,245 Q972,231 987.5,231 Q1003,231 1015,245 Q1003,260 987.5,260 Q972,260 960,245 Z" fill="#4677d6"/><path d="M979,264 L979,240 Q979,231 987.5,231 Q996,231 996,240 L996,264" stroke="#0f8a52" stroke-width="1.5" fill="none"/><line x1="984" y1="235" x2="984" y2="264" stroke="#0f8a52"/><line x1="991" y1="235" x2="991" y2="264" stroke="#0f8a52"/><line x1="979" y1="240" x2="996" y2="240" stroke="#0f8a52"/><path d="M976,216 Q981,208 987.5,208 Q994,208 999,216" stroke="#0f8a52" stroke-width="2" fill="none"/><line x1="984.5" y1="98" x2="984.5" y2="290" stroke="#1aa3c4" stroke-width="1.2" stroke-opacity="0.8"/></g><line x1="984.5" y1="643" x2="984.5" y2="673" stroke="#c8901e" stroke-width="1.8"/></g></g><path d="M372.5,98.5 L511.5,98.5 L511.5,117.5 L507.5,121.5 L372.5,121.5 Z" fill="#7fb38b" shape-rendering="auto"/><rect x="498" y="101" width="1.2" height="19" fill="#1a1a1a"/><path d="M502,108 L509,108 L505.5,112.5 Z" fill="#111" shape-rendering="auto"/><text x="386" y="115.5" font-size="14.5" fill="#1a1a2a" shape-rendering="auto">Through Finger</text></svg>
</body></html>
